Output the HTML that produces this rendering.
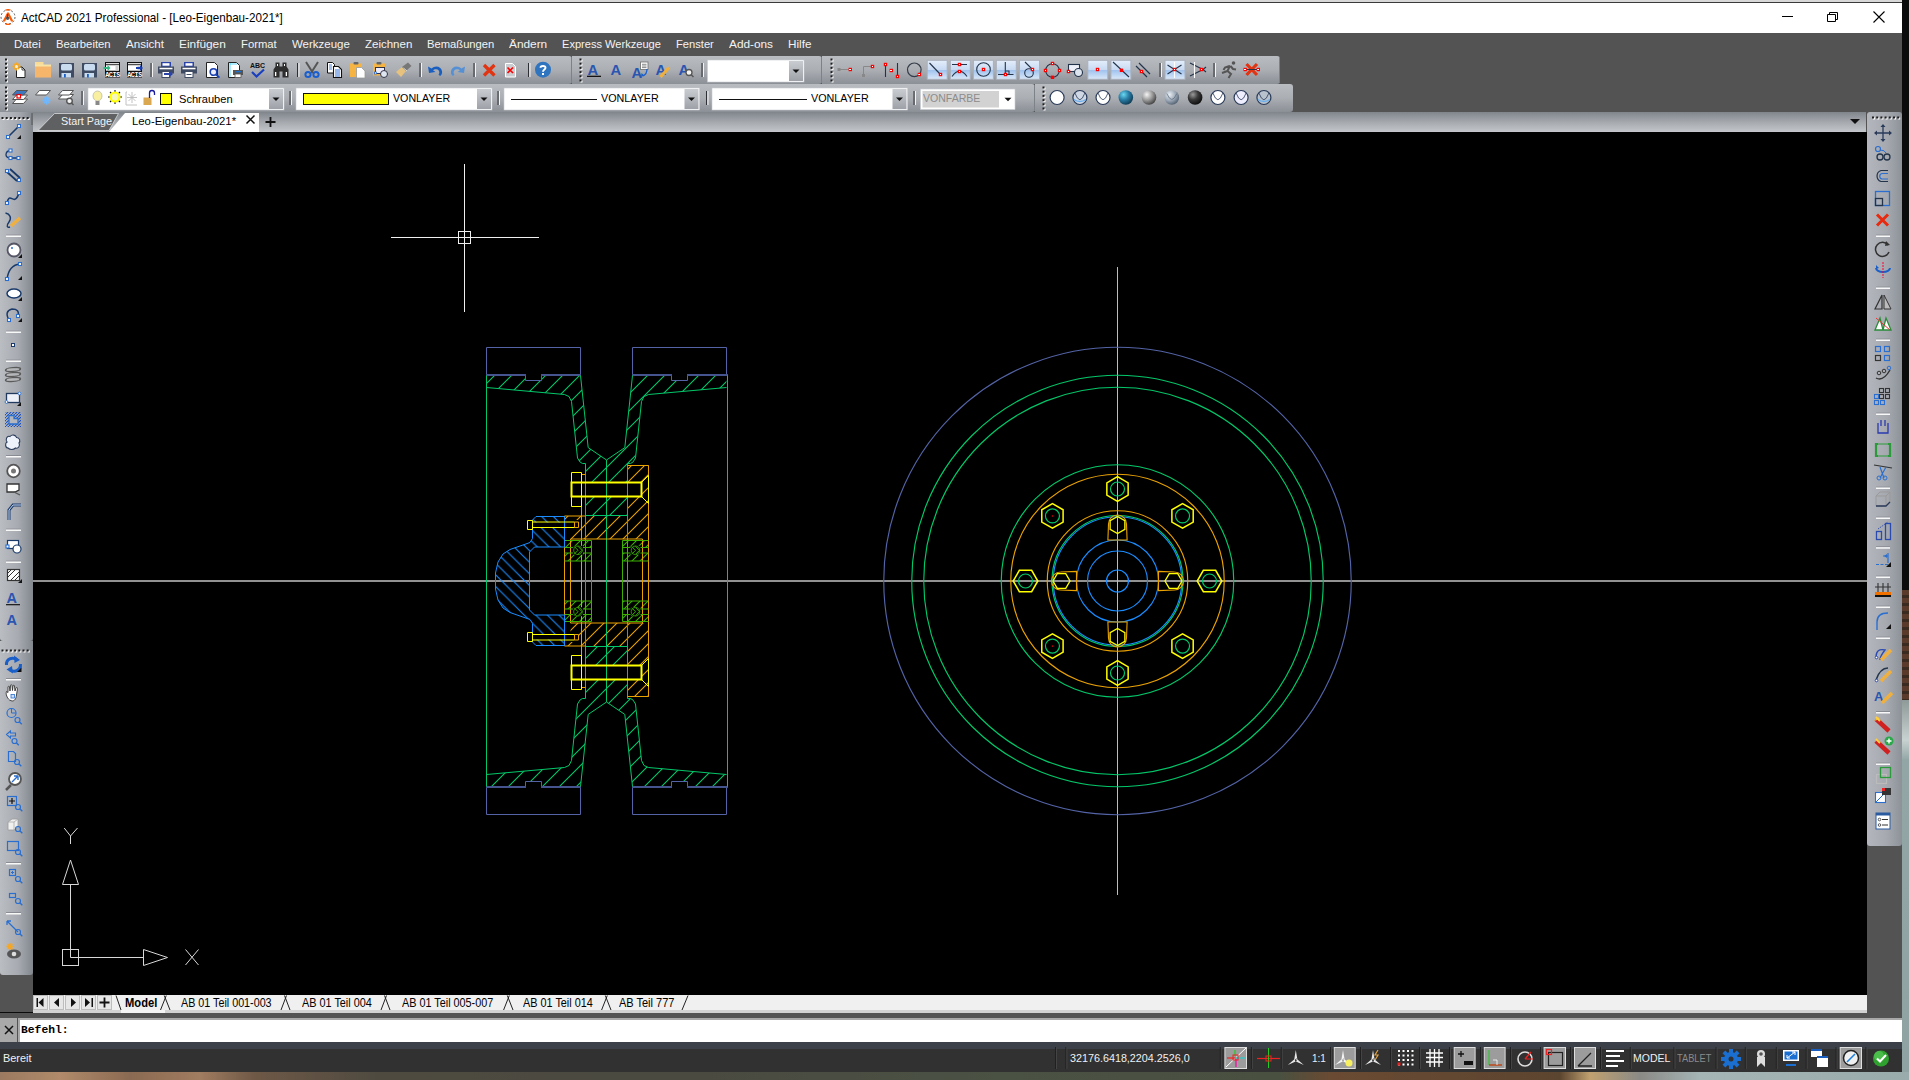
<!DOCTYPE html><html><head><meta charset="utf-8"><style>
*{margin:0;padding:0;box-sizing:border-box}
html,body{width:1909px;height:1080px;overflow:hidden;background:#0a0a0a}
.a{position:absolute}
.tx{position:absolute;white-space:pre;transform-origin:0 0}
svg{position:absolute;left:0;top:0;overflow:visible}
</style></head><body><div class="a" style="left:0px;top:0px;width:1909px;height:1080px;background:#0b0b0b"></div>
<div class="a" style="left:1902px;top:590px;width:7px;height:110px;background:repeating-linear-gradient(#5a3a2a 0 5px,#3a2a20 5px 8px)"></div>
<div class="a" style="left:1902px;top:700px;width:7px;height:380px;background:linear-gradient(#8e9a98 0,#c8d2d0 40px,#93a6a6 60px,#8fa3a3 100%)"></div>
<div class="a" style="left:0px;top:1072px;width:1909px;height:8px;background:linear-gradient(90deg,#9a7a60 0,#b08a6a 60px,#8a6a52 130px,#a07c60 200px,#6e5846 255px,#4e4a40 380px,#4a4a40 700px,#4a5244 1000px,#4a5040 1280px,#6a4a32 1330px,#5c4530 1560px,#c0a070 1590px,#8a8a86 1640px,#a5b5b5 1700px,#9aabab 1909px)"></div>
<div class="a" style="left:0px;top:0px;width:1902px;height:2px;background:#d8d8d8"></div>
<div class="a" style="left:0px;top:2px;width:1902px;height:1px;background:#3a3a3a"></div>
<div class="a" style="left:0px;top:3px;width:1902px;height:30px;background:#ffffff"></div>
<svg style="left:0px;top:9px" width="16" height="16" viewBox="0 0 16 16"><circle cx="8" cy="8" r="7" fill="none" stroke="#333" stroke-width="0.8" stroke-dasharray="2 2"/><path d="M5.5 1.2 A7 7 0 0 1 10.5 1.2" stroke="#ff5a00" stroke-width="1.3" fill="none"/><path d="M5.5 14.8 A7 7 0 0 0 10.5 14.8" stroke="#ff5a00" stroke-width="1.3" fill="none"/><path d="M2.5 12.5 L7.2 3.5 L8.8 3.5 L13.5 12.5 L11 12.5 L8 6.5 L5 12.5 Z" fill="#ff5a00"/><circle cx="7.6" cy="9.2" r="1.7" fill="#555"/><path d="M7.6 5 L7.6 9" stroke="#444" stroke-width="1.2"/></svg>
<span class="tx" style="left:21.30px;top:11.00px;font-size:12.52px;line-height:14px;font-family:'Liberation Sans', sans-serif;font-weight:normal;color:#000;transform:scaleX(0.9309);">ActCAD 2021 Professional - [Leo-Eigenbau-2021*]</span>
<svg style="left:1782px;top:16px" width="12" height="1" viewBox="0 0 12 1"><rect width="11" height="1" fill="#000"/></svg><svg style="left:1827px;top:12px" width="12" height="10" viewBox="0 0 12 10"><path d="M0.5 2.5h8v7h-8z M2.5 2.5v-2h8v7h-2" fill="none" stroke="#000"/></svg><svg style="left:1873px;top:11px" width="12" height="12" viewBox="0 0 12 12"><path d="M0.5 0.5 L11.5 11.5 M11.5 0.5 L0.5 11.5" stroke="#000" stroke-width="1.1"/></svg>
<div class="a" style="left:0px;top:33px;width:1902px;height:23px;background:#535353"></div>
<span class="tx" style="left:14.30px;top:38.00px;font-size:11.41px;line-height:12px;font-family:'Liberation Sans', sans-serif;font-weight:normal;color:#f4f4f4;transform:scaleX(1.0028);">Datei</span>
<span class="tx" style="left:56.00px;top:38.00px;font-size:11.41px;line-height:12px;font-family:'Liberation Sans', sans-serif;font-weight:normal;color:#f4f4f4;transform:scaleX(0.9897);">Bearbeiten</span>
<span class="tx" style="left:126.00px;top:38.00px;font-size:11.41px;line-height:12px;font-family:'Liberation Sans', sans-serif;font-weight:normal;color:#f4f4f4;transform:scaleX(1.0160);">Ansicht</span>
<span class="tx" style="left:179.00px;top:38.00px;font-size:11.41px;line-height:12px;font-family:'Liberation Sans', sans-serif;font-weight:normal;color:#f4f4f4;transform:scaleX(1.0394);">Einfügen</span>
<span class="tx" style="left:240.90px;top:38.00px;font-size:11.41px;line-height:12px;font-family:'Liberation Sans', sans-serif;font-weight:normal;color:#f4f4f4;transform:scaleX(0.9883);">Format</span>
<span class="tx" style="left:291.70px;top:38.00px;font-size:11.41px;line-height:12px;font-family:'Liberation Sans', sans-serif;font-weight:normal;color:#f4f4f4;transform:scaleX(1.0056);">Werkzeuge</span>
<span class="tx" style="left:364.60px;top:38.00px;font-size:11.41px;line-height:12px;font-family:'Liberation Sans', sans-serif;font-weight:normal;color:#f4f4f4;transform:scaleX(1.0081);">Zeichnen</span>
<span class="tx" style="left:426.70px;top:38.00px;font-size:11.41px;line-height:12px;font-family:'Liberation Sans', sans-serif;font-weight:normal;color:#f4f4f4;transform:scaleX(0.9828);">Bemaßungen</span>
<span class="tx" style="left:508.50px;top:38.00px;font-size:11.41px;line-height:12px;font-family:'Liberation Sans', sans-serif;font-weight:normal;color:#f4f4f4;transform:scaleX(1.0386);">Ändern</span>
<span class="tx" style="left:561.80px;top:38.00px;font-size:11.41px;line-height:12px;font-family:'Liberation Sans', sans-serif;font-weight:normal;color:#f4f4f4;transform:scaleX(0.9711);">Express Werkzeuge</span>
<span class="tx" style="left:676.20px;top:38.00px;font-size:11.41px;line-height:12px;font-family:'Liberation Sans', sans-serif;font-weight:normal;color:#f4f4f4;transform:scaleX(0.9776);">Fenster</span>
<span class="tx" style="left:728.50px;top:38.00px;font-size:11.41px;line-height:12px;font-family:'Liberation Sans', sans-serif;font-weight:normal;color:#f4f4f4;transform:scaleX(1.0357);">Add-ons</span>
<span class="tx" style="left:788.10px;top:38.00px;font-size:11.41px;line-height:12px;font-family:'Liberation Sans', sans-serif;font-weight:normal;color:#f4f4f4;transform:scaleX(1.0255);">Hilfe</span>
<div class="a" style="left:0px;top:56px;width:1902px;height:56px;background:#535353"></div>
<div class="a" style="left:0px;top:56px;width:572px;height:28px;background:linear-gradient(#b9bcc1 0,#abafb4 50%,#8b8f96 100%);border-radius:0 3px 3px 0"></div>
<div class="a" style="left:572px;top:56px;width:250px;height:28px;background:linear-gradient(#b9bcc1 0,#abafb4 50%,#8b8f96 100%);border-radius:0 3px 3px 0"></div>
<div class="a" style="left:822px;top:56px;width:458px;height:28px;background:linear-gradient(#b9bcc1 0,#abafb4 50%,#8b8f96 100%);border-radius:0 3px 3px 0"></div>
<div class="a" style="left:0px;top:84px;width:1035px;height:28px;background:linear-gradient(#b9bcc1 0,#abafb4 50%,#8b8f96 100%);border-radius:0 3px 3px 0"></div>
<div class="a" style="left:1035px;top:84px;width:258px;height:28px;background:linear-gradient(#b9bcc1 0,#abafb4 50%,#8b8f96 100%);border-radius:0 3px 3px 0"></div>
<svg width="1909" height="1080" viewBox="0 0 1909 1080"><defs><linearGradient id="hlg" x1="0" y1="0" x2="0" y2="1"><stop offset="0" stop-color="#e4eefb"/><stop offset="0.5" stop-color="#c7daf3"/><stop offset="0.52" stop-color="#9fc2ee"/><stop offset="1" stop-color="#dbe9f9"/></linearGradient><linearGradient id="ddg" x1="0" y1="0" x2="0" y2="1"><stop offset="0" stop-color="#c9ccd1"/><stop offset="1" stop-color="#9ea2a8"/></linearGradient><radialGradient id="sph_b" cx="0.35" cy="0.3" r="0.7"><stop offset="0" stop-color="#6ad8f0"/><stop offset="0.5" stop-color="#2a7fa8"/><stop offset="1" stop-color="#12405a"/></radialGradient><radialGradient id="sph_g" cx="0.35" cy="0.3" r="0.7"><stop offset="0" stop-color="#f4f4f4"/><stop offset="0.55" stop-color="#9a9a9a"/><stop offset="1" stop-color="#4a4a4a"/></radialGradient><radialGradient id="sph_k" cx="0.35" cy="0.3" r="0.7"><stop offset="0" stop-color="#9a9a9a"/><stop offset="0.5" stop-color="#3a3a3a"/><stop offset="1" stop-color="#101010"/></radialGradient><radialGradient id="sph_s" cx="0.35" cy="0.3" r="0.7"><stop offset="0" stop-color="#e8eef4"/><stop offset="0.6" stop-color="#9aa6b4"/><stop offset="1" stop-color="#5a6878"/></radialGradient></defs><rect x="571" y="57" width="1" height="26" fill="#7d8188"/><rect x="821" y="57" width="1" height="26" fill="#7d8188"/><rect x="1279" y="57" width="1" height="26" fill="#7d8188"/><rect x="1034" y="85" width="1" height="26" fill="#7d8188"/><rect x="6" y="59.5" width="2" height="2" fill="#fff"/><rect x="5" y="58.5" width="2" height="2" fill="#1e1e1e"/><rect x="6" y="63.7" width="2" height="2" fill="#fff"/><rect x="5" y="62.7" width="2" height="2" fill="#1e1e1e"/><rect x="6" y="67.9" width="2" height="2" fill="#fff"/><rect x="5" y="66.9" width="2" height="2" fill="#1e1e1e"/><rect x="6" y="72.1" width="2" height="2" fill="#fff"/><rect x="5" y="71.1" width="2" height="2" fill="#1e1e1e"/><rect x="6" y="76.3" width="2" height="2" fill="#fff"/><rect x="5" y="75.3" width="2" height="2" fill="#1e1e1e"/><rect x="6" y="80.5" width="2" height="2" fill="#fff"/><rect x="5" y="79.5" width="2" height="2" fill="#1e1e1e"/><g transform="translate(12,62)"><path d="M4.5 5 h5.5 l3 3 v7.5 h-8.5 z" fill="#fff" stroke="#222" stroke-width="1"/><path d="M10 5 v3 h3" fill="none" stroke="#222" stroke-width="0.8"/><g stroke="#f5a623" stroke-width="1.3"><path d="M4.5 0.5 v8 M0.5 4.5 h8 M1.7 1.7 l5.6 5.6 M7.3 1.7 l-5.6 5.6"/></g><circle cx="4.5" cy="4.5" r="1.5" fill="#fff3d0"/></g><g transform="translate(35,62)"><rect x="0" y="0" width="8.5" height="3.5" fill="#f8dc96"/><rect x="0" y="2.5" width="16" height="3" fill="#f8e2a4"/><rect x="0" y="4.5" width="16" height="11" fill="#f5b66c"/></g><g transform="translate(59,63)"><rect x="0" y="0" width="15" height="14.5" fill="#3f4b62"/><rect x="2" y="1" width="11" height="6.5" rx="1.5" fill="#c8dbef"/><rect x="2.5" y="10" width="9.5" height="4.5" fill="#c8dbef"/><rect x="5" y="11" width="1.8" height="3.5" fill="#1a5fc8"/></g><g transform="translate(82,63)"><rect x="0" y="0" width="15" height="14.5" fill="#3f4b62"/><rect x="2" y="1" width="11" height="6.5" rx="1.5" fill="#c8dbef"/><rect x="2.5" y="10" width="9.5" height="4.5" fill="#c8dbef"/><rect x="5" y="11" width="1.8" height="3.5" fill="#1a5fc8"/></g><g transform="translate(105,62)"><rect x="0" y="0" width="15" height="15.5" fill="#111"/><rect x="1" y="1" width="13" height="1.3" fill="#ddd"/><rect x="1" y="3.2" width="13" height="5.5" fill="#fff"/><rect x="10.5" y="3.5" width="3" height="5" fill="#cfcfcf"/><text x="7.5" y="14.8" font-family="Liberation Mono" font-weight="bold" font-size="6.8" fill="#fff" text-anchor="middle" letter-spacing="-0.4">ACIS</text><path d="M-1.5 5 h4 v-2 l3 3 l-3 3 v-2 h-4 z" fill="#36b37e"/></g><g transform="translate(127,62)"><rect x="0" y="0" width="15" height="15.5" fill="#111"/><rect x="1" y="1" width="13" height="1.3" fill="#ddd"/><rect x="1" y="3.2" width="13" height="5.5" fill="#fff"/><rect x="10.5" y="3.5" width="3" height="5" fill="#cfcfcf"/><text x="7.5" y="14.8" font-family="Liberation Mono" font-weight="bold" font-size="6.8" fill="#fff" text-anchor="middle" letter-spacing="-0.4">ACIS</text><path d="M9 5 h4 v-2 l3 3 l-3 3 v-2 h-4 z" fill="#1a3fb0"/></g><rect x="150.5" y="63" width="1.3" height="14" fill="#2d3035"/><rect x="151.8" y="63" width="1.2" height="14" fill="#f4f4f4"/><g transform="translate(158,62)"><rect x="3" y="0" width="10" height="5" fill="#2c44a8"/><rect x="4.5" y="1.2" width="7" height="2.5" fill="#fff"/><rect x="0" y="4.5" width="16" height="7" fill="#3f4b62"/><rect x="1.5" y="5.8" width="13" height="1.5" fill="#fff"/><rect x="4" y="9.5" width="8" height="6" fill="#fff" stroke="#3f4b62" stroke-width="1"/><path d="M6 11 h5 v-2.5 l4 3.5 l-4 3.5 v-2.5 h-5 z" fill="#2c44a8"/></g><g transform="translate(181,62)"><rect x="3" y="0" width="10" height="5" fill="#2c44a8"/><rect x="4.5" y="1.2" width="7" height="2.5" fill="#fff"/><rect x="0" y="4.5" width="16" height="7" fill="#3f4b62"/><rect x="1.5" y="5.8" width="13" height="1.5" fill="#fff"/><rect x="4" y="9.5" width="8" height="6" fill="#fff" stroke="#3f4b62" stroke-width="1"/><rect x="5.5" y="12" width="5" height="1" fill="#3f4b62"/></g><g transform="translate(206,62)"><path d="M0.5 0.5 h8 l3 3 v12 h-11 z" fill="#fff" stroke="#222"/><circle cx="7.5" cy="10" r="3.3" fill="#eef" stroke="#1a40b0" stroke-width="1.6"/><path d="M10 12.5 l3.5 3.2" stroke="#1a40b0" stroke-width="1.8"/></g><g transform="translate(228,62)"><path d="M0.5 0.5 h8 l3 3 v12 h-11 z" fill="#fff" stroke="#222"/><path d="M2 1 v14 M2 2 h7" stroke="#3cf" stroke-width="0.8"/><rect x="5" y="8" width="10" height="5" fill="#555"/><rect x="7" y="9" width="6" height="1.3" fill="#1a6fd0"/><rect x="7" y="12" width="6" height="3.5" fill="#fff" stroke="#555" stroke-width="0.8"/></g><g transform="translate(249.5,62)"><text x="8" y="6.3" font-family="Liberation Sans" font-weight="bold" font-size="7" fill="#111" text-anchor="middle">ABC</text><path d="M2.5 10 L7 14.5 L14.5 7.5" fill="none" stroke="#1a40c0" stroke-width="2.2"/></g><g transform="translate(273,62)"><path d="M2.5 0.5 h4 v4 h3 v-4 h4 v4 l2 3 v8 h-6 v-6 h-3 v6 h-6 v-8 l2 -3 z" fill="#2e2e2e"/><rect x="2" y="10" width="1.3" height="4" fill="#fff"/><rect x="12.7" y="10" width="1.3" height="4" fill="#fff"/><rect x="4" y="2" width="1" height="2" fill="#fff"/><rect x="11" y="2" width="1" height="2" fill="#fff"/></g><rect x="297" y="63" width="1.3" height="14" fill="#2d3035"/><rect x="298.3" y="63" width="1.2" height="14" fill="#f4f4f4"/><g transform="translate(304,62)"><path d="M2 0 L9 11 M14 0 L7 11" stroke="#555" stroke-width="2"/><circle cx="4" cy="12.5" r="2.6" fill="none" stroke="#1a5fd0" stroke-width="2"/><circle cx="12" cy="12.5" r="2.6" fill="none" stroke="#1a5fd0" stroke-width="2"/></g><g transform="translate(327,62)"><path d="M0.5 0.5 h5 l2 2 v8.5 h-7 z" fill="#fff" stroke="#111"/><path d="M2 3h3 M2 5h3 M2 7h3" stroke="#1a5fd0" stroke-width="0.8"/><path d="M6.5 4.5 h5 l3 3 v8 h-8 z" fill="#fff" stroke="#111" stroke-width="1.1"/><path d="M8 8h5 M8 10h5 M8 12h5 M8 14h5" stroke="#1a5fd0" stroke-width="0.9"/></g><g transform="translate(350,62)"><rect x="0" y="1.5" width="12" height="13.5" fill="#f6b443"/><rect x="3.5" y="0" width="5" height="2.5" rx="1" fill="#666"/><path d="M6.5 5.5 h5 l3.5 3.5 v7 h-8.5 z" fill="#fff" stroke="#999" stroke-width="0.8"/></g><g transform="translate(373,62)"><rect x="0" y="1.5" width="12" height="12" fill="#f6b443"/><rect x="3.5" y="0" width="5" height="2.5" rx="1" fill="#666"/><rect x="2.5" y="5.5" width="9" height="6" fill="#eef" stroke="#334" stroke-width="1"/><circle cx="11" cy="12" r="3.5" fill="#dde6f0" stroke="#334"/><rect x="1.5" y="10" width="2" height="2" fill="#fff" stroke="#1a5fd0" stroke-width="0.7"/></g><g transform="translate(396,62)"><path d="M0 10 L6 5 L10 9 L5 15 Z" fill="#e6c27e"/><path d="M6 5 L12 0.5 L15.5 4 L10 9 Z" fill="#777"/><path d="M7.5 6 L11 9" stroke="#eee" stroke-width="0.8"/></g><rect x="419.5" y="63" width="1.3" height="14" fill="#2d3035"/><rect x="420.8" y="63" width="1.2" height="14" fill="#f4f4f4"/><g transform="translate(427,62)"><path d="M2 11 L1 4.5 L4.5 6.5 C8 3 14 4 15 9 C15.5 11.5 14.5 13 13 14 L11.5 12.5 C13 11 12.5 7.5 9.5 7.2 C8 7 6.8 7.6 6 8.3 L8.5 10 Z" fill="#1a5fc0"/></g><g transform="translate(450,62)"><path d="M14 11 L15 4.5 L11.5 6.5 C8 3 2 4 1 9 C0.5 11.5 1.5 13 3 14 L4.5 12.5 C3 11 3.5 7.5 6.5 7.2 C8 7 9.2 7.6 10 8.3 L7.5 10 Z" fill="#5590d4"/></g><rect x="473.5" y="63" width="1.3" height="14" fill="#2d3035"/><rect x="474.8" y="63" width="1.2" height="14" fill="#f4f4f4"/><g transform="translate(482.5,63.5)"><path d="M1.5 1.5 L12 12 M12 1.5 L1.5 12" stroke="#e03412" stroke-width="3.3"/></g><g transform="translate(505,63)"><path d="M0.5 0.5 h7 l3 3 v10.5 h-10 z" fill="#c9ccd0" stroke="#fff" stroke-width="1"/><path d="M2.5 4.5 L8 10 M8 4.5 L2.5 10" stroke="#f00" stroke-width="1.6"/></g><rect x="528" y="63" width="1.3" height="14" fill="#2d3035"/><rect x="529.3" y="63" width="1.2" height="14" fill="#f4f4f4"/><g transform="translate(535,62)"><circle cx="8" cy="7.7" r="8" fill="#2f74bf"/><path d="M5.5 5.8 C5.5 3.5 10.5 3.3 10.5 5.8 C10.5 7.5 8 7.5 8 9.8" fill="none" stroke="#fff" stroke-width="1.9"/><rect x="7" y="11" width="2" height="2" fill="#fff"/></g><rect x="580.5" y="59.5" width="2" height="2" fill="#fff"/><rect x="579.5" y="58.5" width="2" height="2" fill="#1e1e1e"/><rect x="580.5" y="63.7" width="2" height="2" fill="#fff"/><rect x="579.5" y="62.7" width="2" height="2" fill="#1e1e1e"/><rect x="580.5" y="67.9" width="2" height="2" fill="#fff"/><rect x="579.5" y="66.9" width="2" height="2" fill="#1e1e1e"/><rect x="580.5" y="72.1" width="2" height="2" fill="#fff"/><rect x="579.5" y="71.1" width="2" height="2" fill="#1e1e1e"/><rect x="580.5" y="76.3" width="2" height="2" fill="#fff"/><rect x="579.5" y="75.3" width="2" height="2" fill="#1e1e1e"/><rect x="580.5" y="80.5" width="2" height="2" fill="#fff"/><rect x="579.5" y="79.5" width="2" height="2" fill="#1e1e1e"/><text x="587.5" y="75" font-family="Liberation Sans" font-weight="bold" font-size="14.8" fill="#2a55b0">A</text><rect x="587" y="75.7" width="14" height="1.3" fill="#111"/><text x="610.5" y="75" font-family="Liberation Sans" font-weight="bold" font-size="14.8" fill="#2a55b0">A</text><text x="631.5" y="77.5" font-family="Liberation Sans" font-weight="bold" font-size="14.8" fill="#2a55b0">A</text><rect x="640.5" y="62" width="7.5" height="7.5" fill="#fff" stroke="#777" stroke-width="0.9"/><path d="M642 64.3h4.5 M642 66h4.5 M642 67.6h4.5" stroke="#555" stroke-width="0.7"/><path d="M647 69 C647 73 645 75 643 76" fill="none" stroke="#1a5fd0" stroke-width="1.3"/><path d="M641 77 l0.5-4 l3 2.5z" fill="#1a5fd0"/><text x="655.5" y="75" font-family="Liberation Sans" font-weight="bold" font-size="14.8" fill="#2a55b0">A</text><path d="M660.5 77 L669 67.5" stroke="#f0b040" stroke-width="3.2"/><text x="678.5" y="75" font-family="Liberation Sans" font-weight="bold" font-size="14.8" fill="#2a55b0">A</text><circle cx="689" cy="72.5" r="3" fill="#f4f4f4" stroke="#555" stroke-width="1.3"/><path d="M691 74.5 l2.5 2.5" stroke="#555" stroke-width="1.5"/><rect x="701.5" y="63" width="1.3" height="14" fill="#2d3035"/><rect x="702.8" y="63" width="1.2" height="14" fill="#f4f4f4"/><rect x="707.5" y="60" width="96.5" height="22" fill="#fff" stroke="#c8cbd0" stroke-width="0.6"/><rect x="789" y="61" width="14" height="20" fill="url(#ddg)"/><path d="M792.5,69.5 h7 l-3.5,3.5 z" fill="#111"/><rect x="831.5" y="59.5" width="2" height="2" fill="#fff"/><rect x="830.5" y="58.5" width="2" height="2" fill="#1e1e1e"/><rect x="831.5" y="63.7" width="2" height="2" fill="#fff"/><rect x="830.5" y="62.7" width="2" height="2" fill="#1e1e1e"/><rect x="831.5" y="67.9" width="2" height="2" fill="#fff"/><rect x="830.5" y="66.9" width="2" height="2" fill="#1e1e1e"/><rect x="831.5" y="72.1" width="2" height="2" fill="#fff"/><rect x="830.5" y="71.1" width="2" height="2" fill="#1e1e1e"/><rect x="831.5" y="76.3" width="2" height="2" fill="#fff"/><rect x="830.5" y="75.3" width="2" height="2" fill="#1e1e1e"/><rect x="831.5" y="80.5" width="2" height="2" fill="#fff"/><rect x="830.5" y="79.5" width="2" height="2" fill="#1e1e1e"/><rect x="837.5" y="68" width="3" height="3" fill="#888"/><path d="M840 69.5 H849" stroke="#888" stroke-width="1"/><rect x="849.1999999999999" y="68.4" width="2.2" height="2.2" fill="#fff" stroke="#f00" stroke-width="1.2"/><rect x="862" y="74" width="3" height="3" fill="#888"/><path d="M863.5 74 V66.5 H871" fill="none" stroke="#888" stroke-width="1"/><rect x="871.4" y="65.4" width="2.2" height="2.2" fill="#fff" stroke="#f00" stroke-width="1.2"/><path d="M885.5 64 V77 M897.5 63 V77" stroke="#22334a" stroke-width="1.1"/><rect x="884.4" y="63.4" width="2.2" height="2.2" fill="#fff" stroke="#f00" stroke-width="1.2"/><rect x="890.1999999999999" y="69.4" width="2.2" height="2.2" fill="#fff" stroke="#f00" stroke-width="1.2"/><rect x="896.4" y="75.4" width="2.2" height="2.2" fill="#fff" stroke="#f00" stroke-width="1.2"/><circle cx="914.3" cy="69.8" r="6.8" fill="none" stroke="#333c48" stroke-width="1.2"/><rect x="918.3" y="73.4" width="2.2" height="2.2" fill="#fff" stroke="#f00" stroke-width="1.2"/><rect x="927.2" y="60.3" width="20" height="19" fill="url(#hlg)" stroke="#a8b0bb"/><rect x="950.3" y="60.3" width="20" height="19" fill="url(#hlg)" stroke="#a8b0bb"/><rect x="973.4" y="60.3" width="20" height="19" fill="url(#hlg)" stroke="#a8b0bb"/><rect x="996.3" y="60.3" width="20" height="19" fill="url(#hlg)" stroke="#a8b0bb"/><rect x="1019.5" y="60.3" width="20" height="19" fill="url(#hlg)" stroke="#a8b0bb"/><rect x="1087.8" y="60.3" width="20" height="19" fill="url(#hlg)" stroke="#a8b0bb"/><rect x="1110.9" y="60.3" width="20" height="19" fill="url(#hlg)" stroke="#a8b0bb"/><rect x="1165.0" y="60.3" width="20" height="19" fill="url(#hlg)" stroke="#a8b0bb"/><path d="M929.5 63 L940.5 74.5" stroke="#22334a" stroke-width="1.1"/><rect x="939.4" y="73.4" width="2.2" height="2.2" fill="#fff" stroke="#f00" stroke-width="1.2"/><path d="M952 64.5 H967 M952 76.5 Q959.5 66 967 76.5" fill="none" stroke="#22334a" stroke-width="1.1"/><rect x="958.4" y="63.4" width="2.2" height="2.2" fill="#fff" stroke="#f00" stroke-width="1.2"/><rect x="958.4" y="70.4" width="2.2" height="2.2" fill="#fff" stroke="#f00" stroke-width="1.2"/><circle cx="983.5" cy="69.5" r="6.8" fill="none" stroke="#22334a" stroke-width="1.1"/><rect x="982.4" y="68.4" width="2.2" height="2.2" fill="#fff" stroke="#f00" stroke-width="1.2"/><path d="M1005.3 62 V74.5 M998 74.5 H1013.5 M1006 71 H1009 V74" fill="none" stroke="#22334a" stroke-width="1.1"/><rect x="1004.4" y="73.4" width="2.2" height="2.2" fill="#fff" stroke="#f00" stroke-width="1.2"/><path d="M1025 62 L1032 69" stroke="#22334a" stroke-width="1.1"/><circle cx="1029" cy="73" r="4.3" fill="none" stroke="#22334a" stroke-width="1.1"/><rect x="1031.4" y="68.4" width="2.2" height="2.2" fill="#fff" stroke="#f00" stroke-width="1.2"/><circle cx="1052.5" cy="70.5" r="6.8" fill="none" stroke="#22334a" stroke-width="1.1"/><rect x="1051.4" y="62.4" width="2.2" height="2.2" fill="#fff" stroke="#f00" stroke-width="1.2"/><rect x="1044.4" y="69.4" width="2.2" height="2.2" fill="#fff" stroke="#f00" stroke-width="1.2"/><rect x="1058.4" y="69.4" width="2.2" height="2.2" fill="#fff" stroke="#f00" stroke-width="1.2"/><rect x="1051.4" y="76.2" width="2.2" height="2.2" fill="#fff" stroke="#f00" stroke-width="1.2"/><rect x="1068.5" y="64.5" width="11" height="7" fill="#eef2f8" stroke="#22334a" stroke-width="1.1"/><circle cx="1078.5" cy="72.5" r="4" fill="#dde4ee" stroke="#22334a" stroke-width="1.1"/><rect x="1067.4" y="70.4" width="2.2" height="2.2" fill="#fff" stroke="#f00" stroke-width="1.2"/><rect x="1096.4" y="68.4" width="2.2" height="2.2" fill="#fff" stroke="#f00" stroke-width="1.2"/><path d="M1113 62 L1129 77" stroke="#22334a" stroke-width="1.1"/><rect x="1120.4" y="69.2" width="2.2" height="2.2" fill="#fff" stroke="#f00" stroke-width="1.2"/><path d="M1136 66 L1147 77 M1139 63 L1150 74" stroke="#22334a" stroke-width="1.2"/><rect x="1140.4" y="70.4" width="2.2" height="2.2" fill="#fff" stroke="#f00" stroke-width="1.2"/><rect x="1159.5" y="63" width="1.3" height="14" fill="#2d3035"/><rect x="1160.8" y="63" width="1.2" height="14" fill="#f4f4f4"/><path d="M1167.5 65 L1181.5 74 M1181.5 65 L1167.5 74" stroke="#22334a" stroke-width="1.1"/><path d="M1174.5 62 V78" stroke="#fff" stroke-width="1.1"/><rect x="1173.4" y="68.4" width="2.2" height="2.2" fill="#fff" stroke="#f00" stroke-width="1.2"/><path d="M1190 63 L1203 69.5 L1190 76 M1203 69.5 L1206 67 M1203 69.5 L1206 72" fill="none" stroke="#22334a" stroke-width="1.1"/><path d="M1194.5 62 V78" stroke="#fff" stroke-width="1.1"/><rect x="1200.4" y="68.4" width="2.2" height="2.2" fill="#fff" stroke="#f00" stroke-width="1.2"/><rect x="1213.5" y="63" width="1.3" height="14" fill="#2d3035"/><rect x="1214.8" y="63" width="1.2" height="14" fill="#f4f4f4"/><circle cx="1233.5" cy="63" r="1.8" fill="#555"/><path d="M1230 65.5 L1227.5 71 L1231 74 L1228.5 78 M1227.5 71 L1222 73 M1229.5 66 L1225 67.5 L1223.5 70 M1230.5 66 L1233 69 L1236 69.5" fill="none" stroke="#555" stroke-width="2"/><path d="M1246.5 64 L1257 75 M1257 64 L1246.5 75" stroke="#e03412" stroke-width="3.2"/><path d="M1245 69.5 H1259" stroke="#22334a" stroke-width="1"/><rect x="1244.1000000000001" y="68.4" width="2.2" height="2.2" fill="#fff" stroke="#f00" stroke-width="1.2"/><rect x="1257.2" y="68.4" width="2.2" height="2.2" fill="#fff" stroke="#f00" stroke-width="1.2"/><rect x="6" y="87.5" width="2" height="2" fill="#fff"/><rect x="5" y="86.5" width="2" height="2" fill="#1e1e1e"/><rect x="6" y="91.7" width="2" height="2" fill="#fff"/><rect x="5" y="90.7" width="2" height="2" fill="#1e1e1e"/><rect x="6" y="95.9" width="2" height="2" fill="#fff"/><rect x="5" y="94.9" width="2" height="2" fill="#1e1e1e"/><rect x="6" y="100.1" width="2" height="2" fill="#fff"/><rect x="5" y="99.1" width="2" height="2" fill="#1e1e1e"/><rect x="6" y="104.3" width="2" height="2" fill="#fff"/><rect x="5" y="103.3" width="2" height="2" fill="#1e1e1e"/><rect x="6" y="108.5" width="2" height="2" fill="#fff"/><rect x="5" y="107.5" width="2" height="2" fill="#1e1e1e"/><path d="M16.5,99.0 h11 l-4,4.5 h-11 z" fill="#fff" stroke="#555" stroke-width="1"/><path d="M16.5,95.0 h11 l-4,4.5 h-11 z" fill="#fff" stroke="#555" stroke-width="1"/><path d="M16.5,90.5 h11 l-4,4.5 h-11 z" fill="#3b78c0" stroke="#555" stroke-width="1"/><rect x="17" y="94.5" width="3.5" height="3.5" fill="#fff" stroke="#e00" stroke-width="1.2"/><path d="M39.5,90.5 h11 l-4,4.5 h-11 z" fill="#fff" stroke="#555" stroke-width="1"/><g stroke="#6fb8ff" stroke-width="1.3"><path d="M46.5 96.5 v8 M42.5 100.5 h8 M43.7 97.7 l5.6 5.6 M49.3 97.7 l-5.6 5.6"/></g><path d="M62.5,94.5 h11 l-4,4.5 h-11 z" fill="#fff" stroke="#555" stroke-width="1"/><path d="M62.5,90.5 h11 l-4,4.5 h-11 z" fill="#fff" stroke="#555" stroke-width="1"/><circle cx="69.5" cy="101" r="2.8" fill="#f4f4f4" stroke="#555" stroke-width="1.4"/><path d="M71.5 103 l2 2" stroke="#555" stroke-width="1.5"/><rect x="81.5" y="91" width="1.3" height="14" fill="#2d3035"/><rect x="82.8" y="91" width="1.2" height="14" fill="#f4f4f4"/><rect x="88" y="88" width="196" height="22" fill="#fff" stroke="#c8cbd0" stroke-width="0.6"/><rect x="269" y="89" width="14" height="20" fill="url(#ddg)"/><path d="M272.5,97.5 h7 l-3.5,3.5 z" fill="#111"/><ellipse cx="97.5" cy="96" rx="4.5" ry="5" fill="#f8f0a0" stroke="#bba" stroke-width="0.8"/><rect x="95.5" y="101" width="4" height="4" fill="#888"/><g stroke="#111" stroke-width="1.1"><path d="M115 90 v14 M108 97 h14 M110 92 l10 10 M120 92 l-10 10"/></g><circle cx="115" cy="97" r="4.5" fill="#f5f5c0" stroke="#ff0" stroke-width="2"/><g stroke="#bbb" stroke-width="0.9" fill="none"><path d="M132 92 v11 M127 97.5 h10 M128.5 94 l7 7 M135.5 94 l-7 7"/><path d="M127 92 h-1 v13 h11"/></g><rect x="143.5" y="97.5" width="8" height="7.5" fill="#d9a851"/><path d="M149.5 98 v-5 a2.5 2.5 0 0 1 5 0 v2" fill="none" stroke="#1a1aa0" stroke-width="1.3"/><rect x="160.5" y="93.5" width="11" height="11" fill="#ff0" stroke="#111"/><rect x="289.5" y="91" width="1.3" height="14" fill="#2d3035"/><rect x="290.8" y="91" width="1.2" height="14" fill="#f4f4f4"/><rect x="296" y="88" width="196" height="22" fill="#fff" stroke="#c8cbd0" stroke-width="0.6"/><rect x="477" y="89" width="14" height="20" fill="url(#ddg)"/><path d="M480.5,97.5 h7 l-3.5,3.5 z" fill="#111"/><rect x="303.5" y="93.5" width="85" height="11" fill="#ff0" stroke="#111"/><rect x="497.5" y="91" width="1.3" height="14" fill="#2d3035"/><rect x="498.8" y="91" width="1.2" height="14" fill="#f4f4f4"/><rect x="504" y="88" width="195.5" height="22" fill="#fff" stroke="#c8cbd0" stroke-width="0.6"/><rect x="684.5" y="89" width="14" height="20" fill="url(#ddg)"/><path d="M688.0,97.5 h7 l-3.5,3.5 z" fill="#111"/><rect x="511" y="99" width="86" height="1" fill="#111"/><rect x="706" y="91" width="1.3" height="14" fill="#2d3035"/><rect x="707.3" y="91" width="1.2" height="14" fill="#f4f4f4"/><rect x="712" y="88" width="195.5" height="22" fill="#fff" stroke="#c8cbd0" stroke-width="0.6"/><rect x="892.5" y="89" width="14" height="20" fill="url(#ddg)"/><path d="M896.0,97.5 h7 l-3.5,3.5 z" fill="#111"/><rect x="719" y="99" width="88" height="1" fill="#111"/><rect x="913.5" y="91" width="1.3" height="14" fill="#2d3035"/><rect x="914.8" y="91" width="1.2" height="14" fill="#f4f4f4"/><rect x="920.5" y="89" width="94.5" height="20.5" fill="#fff" stroke="#c8cbd0" stroke-width="0.6"/><rect x="922.5" y="91" width="76.5" height="16.5" fill="#d2d2d2"/><path d="M1004.5,97.75 h7 l-3.5,3.5 z" fill="#111"/><rect x="1043.5" y="87.5" width="2" height="2" fill="#fff"/><rect x="1042.5" y="86.5" width="2" height="2" fill="#1e1e1e"/><rect x="1043.5" y="91.7" width="2" height="2" fill="#fff"/><rect x="1042.5" y="90.7" width="2" height="2" fill="#1e1e1e"/><rect x="1043.5" y="95.9" width="2" height="2" fill="#fff"/><rect x="1042.5" y="94.9" width="2" height="2" fill="#1e1e1e"/><rect x="1043.5" y="100.1" width="2" height="2" fill="#fff"/><rect x="1042.5" y="99.1" width="2" height="2" fill="#1e1e1e"/><rect x="1043.5" y="104.3" width="2" height="2" fill="#fff"/><rect x="1042.5" y="103.3" width="2" height="2" fill="#1e1e1e"/><rect x="1043.5" y="108.5" width="2" height="2" fill="#fff"/><rect x="1042.5" y="107.5" width="2" height="2" fill="#1e1e1e"/><circle cx="1057.1" cy="97.5" r="7" fill="#fff" stroke="#2a3a58" stroke-width="1.2"/><circle cx="1079.9" cy="97.5" r="7" fill="#cfd8e4" stroke="#2a3a58" stroke-width="1.2"/><path d="M1074.9,93.0 Q1079.9,106.5 1084.9,93.0" fill="none" stroke="#2a3a58" stroke-width="0.8"/><path d="M1073.9,99.5 Q1079.9,103.5 1085.9,99.5" fill="none" stroke="#6aaef0" stroke-width="1.5"/><circle cx="1103" cy="97.5" r="7" fill="#fff" stroke="#2a3a58" stroke-width="1.2"/><path d="M1098,93.0 Q1103,106.5 1108,93.0" fill="none" stroke="#2a3a58" stroke-width="0.8"/><circle cx="1125.8" cy="97.5" r="7.3" fill="url(#sph_b)"/><circle cx="1149" cy="97.5" r="7.3" fill="url(#sph_g)"/><circle cx="1171.8" cy="97.5" r="7.3" fill="url(#sph_s)"/><path d="M1166.8,93.5 Q1171.8,105.5 1176.8,93.5" fill="none" stroke="#5a6878" stroke-width="0.7"/><circle cx="1195.1" cy="97.5" r="7.3" fill="url(#sph_k)"/><circle cx="1217.9" cy="97.5" r="7" fill="#fff" stroke="#2a3a58" stroke-width="1.2"/><path d="M1212.9,93.0 Q1217.9,106.5 1222.9,93.0" fill="none" stroke="#2a3a58" stroke-width="0.8"/><circle cx="1241.1" cy="97.5" r="7" fill="#eef" stroke="#2a3a58" stroke-width="1.2"/><path d="M1236.1,93.0 Q1241.1,106.5 1246.1,93.0" fill="none" stroke="#2a3a58" stroke-width="0.8"/><circle cx="1263.9" cy="97.5" r="7" fill="#b8c2cc" stroke="#2a3a58" stroke-width="1.2"/><path d="M1258.9,93.0 Q1263.9,106.5 1268.9,93.0" fill="none" stroke="#2a3a58" stroke-width="0.8"/><path d="M1257.9,99.5 Q1263.9,103.5 1269.9,99.5" fill="none" stroke="#6aaef0" stroke-width="1.5"/></svg>
<span class="tx" style="left:178.90px;top:93.00px;font-size:11.13px;line-height:12px;font-family:'Liberation Sans', sans-serif;font-weight:normal;color:#000;transform:scaleX(0.9958);">Schrauben</span>
<span class="tx" style="left:393.20px;top:92.00px;font-size:11.13px;line-height:12px;font-family:'Liberation Sans', sans-serif;font-weight:normal;color:#000;transform:scaleX(0.9585);">VONLAYER</span>
<span class="tx" style="left:600.80px;top:92.00px;font-size:11.13px;line-height:12px;font-family:'Liberation Sans', sans-serif;font-weight:normal;color:#000;transform:scaleX(0.9669);">VONLAYER</span>
<span class="tx" style="left:810.80px;top:92.00px;font-size:11.13px;line-height:12px;font-family:'Liberation Sans', sans-serif;font-weight:normal;color:#000;transform:scaleX(0.9669);">VONLAYER</span>
<span class="tx" style="left:923.00px;top:92.00px;font-size:11.13px;line-height:12px;font-family:'Liberation Sans', sans-serif;font-weight:normal;color:#8c8c8c;transform:scaleX(0.9472);">VONFARBE</span>
<div class="a" style="left:33px;top:112px;width:1834px;height:20px;background:linear-gradient(#80858c,#a5a9ae 50%,#c3c6ca)"></div>
<svg width="1909" height="1080" viewBox="0 0 1909 1080"><path d="M38 130.5 L54.5 113.5 H118.5 L109 130.5 Z" fill="#5f6062" stroke="#d8dadc" stroke-width="0.8"/><path d="M109 132 L125 113 H259 V132 Z" fill="#fff"/><path d="M246.5 115.5 L254.5 123.5 M254.5 115.5 L246.5 123.5" stroke="#111" stroke-width="1.5"/><path d="M270.5 117 V127 M265.5 122 H275.5" stroke="#111" stroke-width="1.8"/><path d="M1850 119 h10 l-5 5 z" fill="#111"/></svg>
<span class="tx" style="left:60.60px;top:115.00px;font-size:11.54px;line-height:12px;font-family:'Liberation Sans', sans-serif;font-weight:normal;color:#f2f2f2;transform:scaleX(0.9368);">Start Page</span>
<span class="tx" style="left:131.50px;top:115.00px;font-size:11.54px;line-height:12px;font-family:'Liberation Sans', sans-serif;font-weight:normal;color:#000;transform:scaleX(0.9838);">Leo-Eigenbau-2021*</span>
<div class="a" style="left:0px;top:112px;width:33px;height:900px;background:#535353"></div>
<div class="a" style="left:0px;top:112px;width:33px;height:529px;background:linear-gradient(90deg,#babdc2,#a7abb1 55%,#82878e);border-radius:0 0 3px 3px"></div>
<div class="a" style="left:0px;top:641px;width:33px;height:334px;background:linear-gradient(90deg,#babdc2,#a7abb1 55%,#82878e);border-radius:0 0 3px 3px"></div>
<div class="a" style="left:1866px;top:112px;width:36px;height:905px;background:#535353"></div>
<div class="a" style="left:1867px;top:112px;width:35px;height:734px;background:linear-gradient(90deg,#b3b6bc,#a6aab0 55%,#8d9299);border-radius:3px"></div>
<svg width="1909" height="1080" viewBox="0 0 1909 1080"><rect x="2.5" y="118" width="2" height="2" fill="#fff"/><rect x="1.5" y="117" width="2" height="2" fill="#1e1e1e"/><rect x="6.7" y="118" width="2" height="2" fill="#fff"/><rect x="5.7" y="117" width="2" height="2" fill="#1e1e1e"/><rect x="10.9" y="118" width="2" height="2" fill="#fff"/><rect x="9.9" y="117" width="2" height="2" fill="#1e1e1e"/><rect x="15.100000000000001" y="118" width="2" height="2" fill="#fff"/><rect x="14.100000000000001" y="117" width="2" height="2" fill="#1e1e1e"/><rect x="19.3" y="118" width="2" height="2" fill="#fff"/><rect x="18.3" y="117" width="2" height="2" fill="#1e1e1e"/><rect x="23.5" y="118" width="2" height="2" fill="#fff"/><rect x="22.5" y="117" width="2" height="2" fill="#1e1e1e"/><rect x="27.700000000000003" y="118" width="2" height="2" fill="#fff"/><rect x="26.700000000000003" y="117" width="2" height="2" fill="#1e1e1e"/><rect x="31.5" y="113" width="1" height="12" fill="#555"/><path d="M8 137 L19 126" stroke="#1a3a6a" stroke-width="1.6"/><rect x="6.5" y="135.5" width="3" height="3" fill="#fff" stroke="#2a6fd0" stroke-width="1.1"/><rect x="17.5" y="124.5" width="3" height="3" fill="#fff" stroke="#2a6fd0" stroke-width="1.1"/><path d="M21,139 h-4 l4,-4 z" fill="#111"/><path d="M10.5 150.5 C5 151 4 158 10.5 158 H18.5" fill="none" stroke="#1a3a6a" stroke-width="1.3"/><rect x="9.0" y="149.0" width="3" height="3" fill="#fff" stroke="#2a6fd0" stroke-width="1.1"/><rect x="9.0" y="156.5" width="3" height="3" fill="#fff" stroke="#2a6fd0" stroke-width="1.1"/><rect x="17.0" y="156.5" width="3" height="3" fill="#fff" stroke="#2a6fd0" stroke-width="1.1"/><path d="M7 172 L17 181 M10 169 L20 178" stroke="#1a3a6a" stroke-width="1.8"/><rect x="5.5" y="169.5" width="3" height="3" fill="#fff" stroke="#2a6fd0" stroke-width="1.1"/><rect x="17.5" y="178.5" width="3" height="3" fill="#fff" stroke="#2a6fd0" stroke-width="1.1"/><path d="M7 203 C10 190 14 208 19 193" fill="none" stroke="#1a3a6a" stroke-width="1.6"/><rect x="5.5" y="201.5" width="3" height="3" fill="#fff" stroke="#2a6fd0" stroke-width="1.1"/><rect x="17.5" y="191.5" width="3" height="3" fill="#fff" stroke="#2a6fd0" stroke-width="1.1"/><path d="M5.5 213 C10 214 12 218 9 222 C6 226 7 228 10 227" fill="none" stroke="#1a3a6a" stroke-width="1.4"/><path d="M11 226 L20 218" stroke="#f0b040" stroke-width="3.3"/><rect x="6" y="234.7" width="15" height="0.8" fill="#80848a"/><rect x="6" y="235.5" width="15" height="1.5" fill="#f8f8f8"/><circle cx="14" cy="250" r="6.5" fill="#fff" stroke="#556" stroke-width="1.8"/><circle cx="12" cy="248" r="1" fill="#2a6fd0"/><path d="M22,258 h-4 l4,-4 z" fill="#111"/><path d="M7 279 Q9 265 20 264" fill="none" stroke="#1a3a6a" stroke-width="1.5"/><rect x="5.5" y="277.5" width="3" height="3" fill="#fff" stroke="#2a6fd0" stroke-width="1.1"/><rect x="18.5" y="262.5" width="3" height="3" fill="#fff" stroke="#2a6fd0" stroke-width="1.1"/><path d="M22,280 h-4 l4,-4 z" fill="#111"/><ellipse cx="14" cy="293.5" rx="7" ry="4.5" fill="#fff" stroke="#1a3a6a" stroke-width="1.5"/><path d="M22,301 h-4 l4,-4 z" fill="#111"/><path d="M9 320 Q4 311 12 309 Q20 309 18 316" fill="none" stroke="#1a3a6a" stroke-width="1.5"/><rect x="7.5" y="318.5" width="3" height="3" fill="#fff" stroke="#2a6fd0" stroke-width="1.1"/><rect x="16.5" y="314.5" width="3" height="3" fill="#fff" stroke="#2a6fd0" stroke-width="1.1"/><path d="M22,322 h-4 l4,-4 z" fill="#111"/><rect x="6" y="330.7" width="15" height="0.8" fill="#80848a"/><rect x="6" y="331.5" width="15" height="1.5" fill="#f8f8f8"/><rect x="11.5" y="343.5" width="3" height="3" fill="#fff" stroke="#1a3a6a" stroke-width="1"/><rect x="6" y="359.7" width="15" height="0.8" fill="#80848a"/><rect x="6" y="360.5" width="15" height="1.5" fill="#f8f8f8"/><g fill="none" stroke="#5a5a5a" stroke-width="1.5"><ellipse cx="13" cy="369.5" rx="7.5" ry="1.8" transform="rotate(-6 13 369.5)"/><ellipse cx="13" cy="374.5" rx="7.5" ry="1.8" transform="rotate(-6 13 374.5)"/><ellipse cx="13" cy="379.5" rx="7.5" ry="1.8" transform="rotate(-6 13 379.5)"/></g><g fill="none" stroke="#c8c8c8" stroke-width="0.6"><ellipse cx="13" cy="369.5" rx="6" ry="0.8"/><ellipse cx="13" cy="374.5" rx="6" ry="0.8"/><ellipse cx="13" cy="379.5" rx="6" ry="0.8"/></g><rect x="6.5" y="393.5" width="13" height="9" fill="#eef0f8" stroke="#223a5e" stroke-width="1.3"/><circle cx="6.5" cy="402" r="1.4" fill="#fff" stroke="#2a6fd0" stroke-width="0.9"/><circle cx="19.5" cy="393.5" r="1.4" fill="#fff" stroke="#2a6fd0" stroke-width="0.9"/><path d="M21,406 h-4 l4,-4 z" fill="#111"/><defs><pattern id="lhp" patternUnits="userSpaceOnUse" width="3" height="3"><path d="M0,3 L3,0" stroke="#1a4fc0" stroke-width="1.1"/></pattern></defs><rect x="5" y="412" width="16" height="15" fill="url(#lhp)"/><path d="M9 415.5 H14 V418.5 H18 V424 H9 Z" fill="#b4b7bd" stroke="#2a6fd0" stroke-width="1.3"/><path d="M8 448 C5 448 5 443 7 442 C5 440 7 435 10 436.5 C12 434 16 435 16.5 437.5 C20 437.5 20.5 441.5 19 443 C20.5 446 18 449 15.5 448 C13.5 450 10 450 8 448 Z" fill="#eef2fa" stroke="#2a3a5a" stroke-width="1.1"/><rect x="6" y="455.2" width="15" height="0.8" fill="#80848a"/><rect x="6" y="456.0" width="15" height="1.5" fill="#f8f8f8"/><circle cx="13.5" cy="471" r="6.3" fill="#fff" stroke="#555" stroke-width="1.8"/><circle cx="13.5" cy="471" r="2.5" fill="#777"/><path d="M7 484 h12 v6 l-4 2 h-8 z" fill="#fff" stroke="#333" stroke-width="1.3"/><path d="M14 492 L20 495" stroke="#555" stroke-width="1.3"/><path d="M9 520 V510 L13 505 H21" fill="none" stroke="#1a3a6a" stroke-width="3"/><path d="M9 520 V510 L13 505 H21" fill="none" stroke="#c8d8f0" stroke-width="1"/><rect x="6" y="528.7" width="15" height="0.8" fill="#80848a"/><rect x="6" y="529.5" width="15" height="1.5" fill="#f8f8f8"/><rect x="7.5" y="540.5" width="11" height="8" fill="#fff" stroke="#1a3a6a" stroke-width="1.2"/><circle cx="17" cy="549" r="4" fill="#fff" stroke="#1a3a6a" stroke-width="1.2"/><rect x="6.0" y="545.0" width="3" height="3" fill="#fff" stroke="#2a6fd0" stroke-width="1.1"/><rect x="6" y="560.7" width="15" height="0.8" fill="#80848a"/><rect x="6" y="561.5" width="15" height="1.5" fill="#f8f8f8"/><rect x="7.5" y="569.5" width="12" height="11" fill="#fff" stroke="#333" stroke-width="1.2"/><path d="M8 577 L15 570 M8 573 L11 570 M11 580 L19 572 M15 580 L19 576" stroke="#333" stroke-width="1"/><path d="M22,583 h-4 l4,-4 z" fill="#111"/><text x="6.5" y="602.5" font-family="Liberation Sans" font-weight="bold" font-size="14.5" fill="#2a55b0">A</text><rect x="6" y="604" width="14" height="1.3" fill="#222"/><text x="6.5" y="625" font-family="Liberation Sans" font-weight="bold" font-size="14.5" fill="#2a55b0">A</text><rect x="2.5" y="650.5" width="2" height="2" fill="#fff"/><rect x="1.5" y="649.5" width="2" height="2" fill="#1e1e1e"/><rect x="6.7" y="650.5" width="2" height="2" fill="#fff"/><rect x="5.7" y="649.5" width="2" height="2" fill="#1e1e1e"/><rect x="10.9" y="650.5" width="2" height="2" fill="#fff"/><rect x="9.9" y="649.5" width="2" height="2" fill="#1e1e1e"/><rect x="15.100000000000001" y="650.5" width="2" height="2" fill="#fff"/><rect x="14.100000000000001" y="649.5" width="2" height="2" fill="#1e1e1e"/><rect x="19.3" y="650.5" width="2" height="2" fill="#fff"/><rect x="18.3" y="649.5" width="2" height="2" fill="#1e1e1e"/><rect x="23.5" y="650.5" width="2" height="2" fill="#fff"/><rect x="22.5" y="649.5" width="2" height="2" fill="#1e1e1e"/><rect x="27.700000000000003" y="650.5" width="2" height="2" fill="#fff"/><rect x="26.700000000000003" y="649.5" width="2" height="2" fill="#1e1e1e"/><path d="M6.5 665 C6 659 12 656.5 17 659.5" fill="none" stroke="#1a5fc8" stroke-width="3"/><path d="M14 655.5 L20 660 L14.5 663 Z" fill="#1a5fc8"/><path d="M20.5 664 C21 670 15 673 10 670" fill="none" stroke="#1a5fc8" stroke-width="3"/><path d="M13 673.5 L6.5 669.5 L12 666 Z" fill="#1a5fc8"/><path d="M17 672 h4.5 v-4.5 z" fill="#111"/><rect x="6" y="678.2" width="15" height="0.8" fill="#80848a"/><rect x="6" y="679.0" width="15" height="1.5" fill="#f8f8f8"/><path d="M9.5 700 C7 698 5.5 694 6.5 691.5 L8 692.5 L8 687 C8 686 9.5 686 9.5 687 L10 691 L10.5 685.5 C10.5 684.5 12 684.5 12 685.5 L12.5 690.5 L13 686 C13 685 14.5 685 14.5 686 L15 691 L16 688 C16.5 687 17.8 687.5 17.5 688.5 L16.5 695 C16 699 14.5 701 12 701 Z" fill="#fff" stroke="#333" stroke-width="0.9"/><rect x="11" y="694.5" width="3.5" height="3.5" fill="#cfe0f8" stroke="#2a6fd0" stroke-width="0.8"/><circle cx="11.5" cy="713" r="4.5" fill="none" stroke="#2a6fd0" stroke-width="1.2"/><path d="M11.5 709 v4 h4" fill="none" stroke="#2a6fd0" stroke-width="1"/><circle cx="17.5" cy="720" r="2.5" fill="none" stroke="#2a6fd0" stroke-width="1.2"/><path d="M19.3,721.8 l2.5,2.5" stroke="#2a6fd0" stroke-width="1.4"/><path d="M6.5 734.5 L10.5 731 V733 H15.5 V736 H10.5 V738 Z" fill="none" stroke="#2a6fd0" stroke-width="1.1"/><circle cx="14.5" cy="741" r="2.5" fill="none" stroke="#2a6fd0" stroke-width="1.2"/><path d="M16.3,742.8 l2.5,2.5" stroke="#2a6fd0" stroke-width="1.4"/><path d="M8.5 751.5 h5 l2 2 v8 h-7 z" fill="none" stroke="#2a6fd0" stroke-width="1.2"/><circle cx="17" cy="762" r="2.5" fill="none" stroke="#2a6fd0" stroke-width="1.2"/><path d="M18.8,763.8 l2.5,2.5" stroke="#2a6fd0" stroke-width="1.4"/><circle cx="15" cy="779" r="6" fill="#fff" stroke="#555" stroke-width="1.8"/><path d="M11 785 L6 790" stroke="#555" stroke-width="2.5"/><path d="M12 782 L18 776 M18 776 h-4 M18 776 v4" stroke="#2a6fd0" stroke-width="1.4" fill="none"/><rect x="7.5" y="796.5" width="9" height="9" fill="none" stroke="#2a6fd0" stroke-width="1.2"/><path d="M12 798 v6 M9 801 h6" stroke="#111" stroke-width="1.2"/><circle cx="18" cy="807" r="2.5" fill="none" stroke="#2a6fd0" stroke-width="1.2"/><path d="M19.8,808.8 l2.5,2.5" stroke="#2a6fd0" stroke-width="1.4"/><path d="M8 822 l4 -3 h6 v8 l-4 3 h-6 z" fill="#f0f0f0" stroke="#999" stroke-width="0.8"/><path d="M8 822 h6 v8 M14 822 l4 -3" fill="none" stroke="#aaa" stroke-width="0.8"/><circle cx="18" cy="829" r="2.5" fill="none" stroke="#2a6fd0" stroke-width="1.2"/><path d="M19.8,830.8 l2.5,2.5" stroke="#2a6fd0" stroke-width="1.4"/><rect x="7.5" y="841.5" width="11" height="9" fill="none" stroke="#2a6fd0" stroke-width="1.2"/><circle cx="18" cy="852" r="2.5" fill="none" stroke="#2a6fd0" stroke-width="1.2"/><path d="M19.8,853.8 l2.5,2.5" stroke="#2a6fd0" stroke-width="1.4"/><rect x="6" y="862.2" width="15" height="0.8" fill="#80848a"/><rect x="6" y="863.0" width="15" height="1.5" fill="#f8f8f8"/><rect x="9.5" y="869.5" width="6" height="6" fill="none" stroke="#2a6fd0" stroke-width="1.2"/><path d="M12.5 871 v3 M11 872.5 h3" stroke="#2a6fd0"/><circle cx="18" cy="879" r="2.5" fill="none" stroke="#2a6fd0" stroke-width="1.2"/><path d="M19.8,880.8 l2.5,2.5" stroke="#2a6fd0" stroke-width="1.4"/><rect x="9.5" y="893.5" width="6" height="4" fill="none" stroke="#2a6fd0" stroke-width="1.2"/><circle cx="18" cy="901" r="2.5" fill="none" stroke="#2a6fd0" stroke-width="1.2"/><path d="M19.8,902.8 l2.5,2.5" stroke="#2a6fd0" stroke-width="1.4"/><rect x="6" y="912.2" width="15" height="0.8" fill="#80848a"/><rect x="6" y="913.0" width="15" height="1.5" fill="#f8f8f8"/><path d="M7 921 L18 932 M7 921 h4 M7 921 v4" stroke="#2a6fd0" stroke-width="1.3" fill="none"/><circle cx="18" cy="932" r="2.5" fill="none" stroke="#2a6fd0" stroke-width="1.2"/><path d="M19.8,933.8 l2.5,2.5" stroke="#2a6fd0" stroke-width="1.4"/><ellipse cx="14" cy="954" rx="7" ry="4.5" fill="#555"/><circle cx="14" cy="954" r="2.3" fill="#ddd"/><g stroke="#f5a623" stroke-width="1.3"><path d="M10 943 v7 M6.5 946.5 h7 M7.5 944 l5 5 M12.5 944 l-5 5"/></g><rect x="1873.0" y="117.5" width="2" height="2" fill="#fff"/><rect x="1872.0" y="116.5" width="2" height="2" fill="#1e1e1e"/><rect x="1877.2" y="117.5" width="2" height="2" fill="#fff"/><rect x="1876.2" y="116.5" width="2" height="2" fill="#1e1e1e"/><rect x="1881.4" y="117.5" width="2" height="2" fill="#fff"/><rect x="1880.4" y="116.5" width="2" height="2" fill="#1e1e1e"/><rect x="1885.6" y="117.5" width="2" height="2" fill="#fff"/><rect x="1884.6" y="116.5" width="2" height="2" fill="#1e1e1e"/><rect x="1889.8" y="117.5" width="2" height="2" fill="#fff"/><rect x="1888.8" y="116.5" width="2" height="2" fill="#1e1e1e"/><rect x="1894.0" y="117.5" width="2" height="2" fill="#fff"/><rect x="1893.0" y="116.5" width="2" height="2" fill="#1e1e1e"/><rect x="1898.2" y="117.5" width="2" height="2" fill="#fff"/><rect x="1897.2" y="116.5" width="2" height="2" fill="#1e1e1e"/><path d="M1883 125 V141 M1875 133 H1891" stroke="#2a3a5a" stroke-width="1.3"/><path d="M1883 124 l-2.5 3 h5 z M1883 142 l-2.5 -3 h5 z M1874 133 l3 -2.5 v5 z M1892 133 l-3 -2.5 v5 z" fill="#2a3a5a"/><circle cx="1878" cy="149" r="2.5" fill="none" stroke="#2a6fd0" stroke-width="1.2"/><circle cx="1880" cy="157" r="3" fill="none" stroke="#22334a" stroke-width="1.3"/><circle cx="1887" cy="157" r="3" fill="none" stroke="#22334a" stroke-width="1.3"/><path d="M1880 150 Q1885 150 1886 153" fill="none" stroke="#2a6fd0"/><path d="M1888 170.5 H1881 A5.8 5.8 0 0 0 1881 181.5 H1888" fill="none" stroke="#22334a" stroke-width="1.2"/><path d="M1888 173.5 H1882 A2.8 2.8 0 0 0 1882 179 H1888" fill="none" stroke="#2a6fd0" stroke-width="1.2"/><rect x="1875.5" y="191.5" width="14" height="14" fill="none" stroke="#2a6fd0" stroke-width="1.3"/><rect x="1875.5" y="198.5" width="7" height="7" fill="none" stroke="#22334a" stroke-width="1.3"/><path d="M1877 214.5 L1888 225.5 M1888 214.5 L1877 225.5" stroke="#e8290f" stroke-width="3"/><rect x="1876" y="234.7" width="14" height="0.8" fill="#80848a"/><rect x="1876" y="235.5" width="14" height="1.5" fill="#f8f8f8"/><path d="M1888 245 A7 7 0 1 0 1889 252" fill="none" stroke="#333" stroke-width="1.5"/><path d="M1886 241 l4 4 l-5 1z" fill="#333"/><path d="M1876 268 A7 4 0 0 0 1890 268" fill="none" stroke="#1a5fc8" stroke-width="2"/><path d="M1876 265 l0 4 l3 -1z" fill="#1a5fc8"/><path d="M1883 262 V278" stroke="#f03" stroke-width="1" stroke-dasharray="2 1"/><rect x="1876" y="286.7" width="14" height="0.8" fill="#80848a"/><rect x="1876" y="287.5" width="14" height="1.5" fill="#f8f8f8"/><path d="M1882 295 L1875 309 H1882 Z" fill="none" stroke="#333" stroke-width="1.2"/><path d="M1884 295 L1891 309 H1884 Z" fill="#bbb" stroke="#333" stroke-width="1"/><path d="M1875 330 L1880 318 L1883 330 Z M1891 330 L1886 318 L1883 330Z" fill="#fff" stroke="#2a8a3a" stroke-width="1.3"/><path d="M1876 318 L1890 330" stroke="#e33" stroke-width="1"/><rect x="1876" y="338.7" width="14" height="0.8" fill="#80848a"/><rect x="1876" y="339.5" width="14" height="1.5" fill="#f8f8f8"/><g fill="none" stroke="#2a6fd0" stroke-width="1.2"><rect x="1875.5" y="346.5" width="5" height="5"/><rect x="1884.5" y="346.5" width="5" height="5"/><rect x="1884.5" y="355.5" width="5" height="5"/></g><rect x="1875.5" y="355.5" width="5" height="5" fill="none" stroke="#333" stroke-width="1.2"/><path d="M1876 378 Q1883 382 1890 370" fill="none" stroke="#333" stroke-width="1.4"/><circle cx="1879" cy="373" r="1.8" fill="none" stroke="#333"/><circle cx="1884" cy="371" r="1.8" fill="none" stroke="#333"/><circle cx="1889" cy="368" r="1.8" fill="none" stroke="#2a6fd0"/><g fill="none" stroke-width="1.1"><rect x="1879.5" y="388.5" width="4" height="4" stroke="#333"/><rect x="1885.5" y="388.5" width="4" height="4" stroke="#333"/><rect x="1879.5" y="394.5" width="4" height="4" stroke="#333"/><rect x="1885.5" y="394.5" width="4" height="4" stroke="#333"/><rect x="1874.5" y="394.5" width="4" height="4" stroke="#2a6fd0"/><rect x="1874.5" y="400.5" width="4" height="4" stroke="#2a6fd0"/><rect x="1880.5" y="400.5" width="4" height="4" stroke="#2a6fd0"/></g><rect x="1876" y="412.7" width="14" height="0.8" fill="#80848a"/><rect x="1876" y="413.5" width="14" height="1.5" fill="#f8f8f8"/><path d="M1878 423 V433 H1888 V423 M1881 420 V426 M1885 420 V426" fill="none" stroke="#2a3ab0" stroke-width="1.3"/><path d="M1878 444 H1876 V456 H1878 M1888 444 H1890 V456 H1888" fill="none" stroke="#2a9a3a" stroke-width="2.2"/><path d="M1876 444 H1890 M1876 456 H1890" stroke="#2a9a3a" stroke-width="1"/><path d="M1874 465 L1892 468" stroke="#333" stroke-width="1.2"/><path d="M1880 467 L1884 478 M1886 467 L1880 478" stroke="#2a6fd0" stroke-width="1.2"/><circle cx="1879" cy="478" r="2" fill="none" stroke="#2a6fd0"/><circle cx="1885" cy="478" r="2" fill="none" stroke="#2a6fd0"/><rect x="1876" y="486.7" width="14" height="0.8" fill="#80848a"/><rect x="1876" y="487.5" width="14" height="1.5" fill="#f8f8f8"/><path d="M1876 496 h10 l4 -4 M1876 496 v10 h10 v-10 M1886 506 l4 -4 v-10 h-10 l-4 4" fill="none" stroke="#999" stroke-width="1"/><path d="M1876 506 L1886 506 L1890 502" stroke="#2a3a5a" stroke-width="1.3" fill="none"/><rect x="1876" y="516.7" width="14" height="0.8" fill="#80848a"/><rect x="1876" y="517.5" width="14" height="1.5" fill="#f8f8f8"/><rect x="1885.5" y="523.5" width="5" height="16" fill="none" stroke="#2a4ab0" stroke-width="1.3"/><rect x="1876.5" y="531.5" width="5" height="8" fill="none" stroke="#2a4ab0" stroke-width="1.3"/><path d="M1878 529 L1888 522" stroke="#2a4ab0" stroke-dasharray="1.5 1" stroke-width="0.9"/><rect x="1876" y="546.4000000000001" width="14" height="0.8" fill="#80848a"/><rect x="1876" y="547.2" width="14" height="1.5" fill="#f8f8f8"/><path d="M1876 564.5 H1890" stroke="#2a6fd0" stroke-width="1.2" stroke-dasharray="3 1.5"/><path d="M1888 553 V563 M1883 556 H1888" stroke="#2a6fd0" stroke-width="1.2"/><path d="M1884 556 l3-2 v4z" fill="#2a6fd0"/><path d="M1891 567 h-5 l5 -5z" fill="#111"/><rect x="1876" y="575.7" width="14" height="0.8" fill="#80848a"/><rect x="1876" y="576.5" width="14" height="1.5" fill="#f8f8f8"/><path d="M1878 583 V596 M1883 583 V596 M1888 583 V596 M1875 587 H1891" stroke="#333" stroke-width="1.1"/><rect x="1875" y="592" width="16" height="3" fill="#f07000"/><path d="M1875 596 H1891" stroke="#111" stroke-width="2"/><rect x="1876" y="605.7" width="14" height="0.8" fill="#80848a"/><rect x="1876" y="606.5" width="14" height="1.5" fill="#f8f8f8"/><path d="M1877 630 V622 Q1877 613 1888 613" fill="none" stroke="#2a6fd0" stroke-width="1.4"/><path d="M1891 629 h-5 l5 -5z" fill="#111"/><rect x="1876" y="636.7" width="14" height="0.8" fill="#80848a"/><rect x="1876" y="637.5" width="14" height="1.5" fill="#f8f8f8"/><path d="M1876 657 Q1876 648 1885 650 Q1880 656 1880 660" fill="none" stroke="#2a4ab0" stroke-width="1.3"/><circle cx="1876.5" cy="657.5" r="1.3" fill="#fff" stroke="#2a4ab0"/><path d="M1881 660 L1891 650" stroke="#f0b040" stroke-width="3.5"/><path d="M1876 680 Q1880 668 1888 668" fill="none" stroke="#22334a" stroke-width="1.6"/><circle cx="1876.5" cy="680.5" r="1.3" fill="#fff" stroke="#2a4ab0"/><path d="M1881 681 L1891 671" stroke="#f0b040" stroke-width="3.5"/><text x="1874" y="701" font-family="Liberation Sans" font-weight="bold" font-size="13" fill="#2a55b0">A</text><path d="M1882 703 L1892 693" stroke="#f0b040" stroke-width="3.5"/><rect x="1876" y="711.2" width="14" height="0.8" fill="#80848a"/><rect x="1876" y="712.0" width="14" height="1.5" fill="#f8f8f8"/><path d="M1876 719 L1889 731" stroke="#d02020" stroke-width="4.5"/><path d="M1874 721 l4 -4 l2 2z" fill="#f5c030"/><path d="M1876 717 L1880 721" stroke="#ffd040" stroke-width="2"/><path d="M1876 741 L1889 753" stroke="#d02020" stroke-width="4.5"/><path d="M1876 739 L1880 743" stroke="#ffd040" stroke-width="2"/><circle cx="1889" cy="741" r="4.5" fill="#2aa84a"/><path d="M1889 738.5 v5 M1886.5 741 h5" stroke="#fff" stroke-width="1.4"/><rect x="1876" y="762.7" width="14" height="0.8" fill="#80848a"/><rect x="1876" y="763.5" width="14" height="1.5" fill="#f8f8f8"/><rect x="1876.5" y="774.5" width="10" height="9" fill="none" stroke="#bbb" stroke-width="1.2"/><rect x="1880.5" y="767.5" width="10" height="10" fill="none" stroke="#2a9a3a" stroke-width="1.3"/><rect x="1875.5" y="792.5" width="10" height="10" fill="#fff" stroke="#2a6fd0" stroke-width="1.1"/><path d="M1876 802 L1885 793" stroke="#2a6fd0"/><rect x="1882" y="788" width="9" height="7" fill="#333"/><rect x="1882" y="788" width="3" height="3" fill="#e22"/><rect x="1876" y="813" width="14" height="16" fill="#fff" stroke="#2a5aa0" stroke-width="1"/><rect x="1876" y="813" width="14" height="2.5" fill="#2a5aa0"/><circle cx="1879.5" cy="819.5" r="1.3" fill="none" stroke="#333" stroke-width="0.8"/><circle cx="1879.5" cy="825" r="1.3" fill="none" stroke="#333" stroke-width="0.8"/><path d="M1882 819.5 h6 M1882 825 h6" stroke="#333"/></svg>
<div class="a" style="left:33px;top:132px;width:1834px;height:863px;background:#000"></div>
<svg width="1909" height="1080" viewBox="0 0 1909 1080" style="shape-rendering:auto">
<defs>
<pattern id="hg" patternUnits="userSpaceOnUse" width="17" height="17" x="3" y="0"><path d="M-17,17 L17,-17 M0,17 L17,0 M0,34 L34,0" stroke="#00c86a" stroke-width="1.1" fill="none"/></pattern>
<pattern id="ho" patternUnits="userSpaceOnUse" width="13" height="13" x="5" y="0"><path d="M-13,13 L13,-13 M0,13 L13,0 M0,26 L26,0" stroke="#eaa200" stroke-width="1.1" fill="none"/></pattern>
<pattern id="hb" patternUnits="userSpaceOnUse" width="11.6" height="11.6" x="2" y="0"><path d="M0,0 L11.6,11.6 M-11.6,0 L11.6,23.2 M0,-11.6 L23.2,11.6" stroke="#1a8cff" stroke-width="1.1" fill="none"/></pattern>
<pattern id="hd" patternUnits="userSpaceOnUse" width="8" height="8" x="1" y="0"><path d="M-8,8 L8,-8 M0,8 L8,0 M0,16 L16,0" stroke="#3cb000" stroke-width="1.1" fill="none"/></pattern>
</defs>
<rect x="33" y="580" width="1834" height="2" fill="#929292"/>
<rect x="1117" y="267" width="1" height="628" fill="#bdbdbd"/>
<rect x="464" y="164" width="1" height="148" fill="#f0f0f0"/>
<rect x="391" y="237" width="148" height="1" fill="#f0f0f0"/>
<rect x="458.5" y="231.5" width="12" height="12" fill="none" stroke="#f0f0f0" stroke-width="1"/>
<polyline points="64.20,828.00 70.50,836.00 77.50,828.00" fill="none" stroke="#d8d8d8" stroke-width="1" /><line x1="70.5" y1="836" x2="70.5" y2="844" stroke="#d8d8d8" stroke-width="1"/>
<polygon points="70.50,860.00 62.50,884.50 78.50,884.50" fill="none" stroke="#d8d8d8" stroke-width="1" />
<line x1="70.5" y1="884.5" x2="70.5" y2="957.5" stroke="#d8d8d8" stroke-width="1"/><line x1="70.5" y1="957.5" x2="143.5" y2="957.5" stroke="#d8d8d8" stroke-width="1"/>
<polygon points="143.50,949.50 167.50,957.50 143.50,965.50" fill="none" stroke="#d8d8d8" stroke-width="1" />
<rect x="62.5" y="949.5" width="16" height="16" fill="none" stroke="#d8d8d8"/>
<line x1="185.5" y1="949.5" x2="198.5" y2="965" stroke="#d8d8d8" stroke-width="1"/><line x1="198.5" y1="949.5" x2="185.5" y2="965" stroke="#d8d8d8" stroke-width="1"/>
<clipPath id="cg0"><polygon points="486.50,375.50 525.50,375.50 525.50,380.50 541.50,380.50 541.50,375.50 580.50,375.50 588.20,447.60 606.50,460.00 606.50,515.50 585.50,515.50 585.50,463.50 582.00,463.50 578.00,459.50 571.50,401.50 569.00,396.50 564.50,394.50 486.50,387.50"/></clipPath><rect x="0" y="0" width="1909" height="1080" fill="url(#hg)" clip-path="url(#cg0)"/>
<clipPath id="cg1"><polygon points="726.50,375.50 687.50,375.50 687.50,380.50 671.50,380.50 671.50,375.50 632.50,375.50 624.80,447.60 606.50,460.00 606.50,515.50 627.50,515.50 627.50,463.50 631.00,463.50 635.00,459.50 641.50,401.50 644.00,396.50 648.50,394.50 726.50,387.50"/></clipPath><rect x="0" y="0" width="1909" height="1080" fill="url(#hg)" clip-path="url(#cg1)"/>
<clipPath id="cg2"><polygon points="486.50,786.50 525.50,786.50 525.50,781.50 541.50,781.50 541.50,786.50 580.50,786.50 588.20,714.40 606.50,702.00 606.50,646.50 585.50,646.50 585.50,698.50 582.00,698.50 578.00,702.50 571.50,760.50 569.00,765.50 564.50,767.50 486.50,774.50"/></clipPath><rect x="0" y="0" width="1909" height="1080" fill="url(#hg)" clip-path="url(#cg2)"/>
<clipPath id="cg3"><polygon points="726.50,786.50 687.50,786.50 687.50,781.50 671.50,781.50 671.50,786.50 632.50,786.50 624.80,714.40 606.50,702.00 606.50,646.50 627.50,646.50 627.50,698.50 631.00,698.50 635.00,702.50 641.50,760.50 644.00,765.50 648.50,767.50 726.50,774.50"/></clipPath><rect x="0" y="0" width="1909" height="1080" fill="url(#hg)" clip-path="url(#cg3)"/>
<clipPath id="co0"><polygon points="627.50,465.50 648.50,465.50 648.50,539.00 570.50,539.00 570.50,530.00 578.50,530.00 578.50,520.00 564.50,520.00 564.50,516.00 585.50,516.00 585.50,515.50 627.50,515.50"/></clipPath><rect x="0" y="0" width="1909" height="1080" fill="url(#ho)" clip-path="url(#co0)"/>
<clipPath id="co1"><polygon points="627.50,696.50 648.50,696.50 648.50,623.00 570.50,623.00 570.50,632.00 578.50,632.00 578.50,642.00 564.50,642.00 564.50,646.00 585.50,646.00 585.50,646.50 627.50,646.50"/></clipPath><rect x="0" y="0" width="1909" height="1080" fill="url(#ho)" clip-path="url(#co1)"/>
<clipPath id="cb0"><polygon points="536.00,516.50 564.50,516.50 564.50,547.00 534.50,547.00 529.50,552.00 529.50,581.00 495.50,581.00 495.50,573.00 498.00,562.00 503.00,554.00 510.00,549.50 530.00,542.50 532.50,538.50 532.50,520.00"/></clipPath><rect x="0" y="0" width="1909" height="1080" fill="url(#hb)" clip-path="url(#cb0)"/>
<clipPath id="cb1"><polygon points="536.00,645.50 564.50,645.50 564.50,615.00 534.50,615.00 529.50,610.00 529.50,581.00 495.50,581.00 495.50,589.00 498.00,600.00 503.00,608.00 510.00,612.50 530.00,619.50 532.50,623.50 532.50,642.00"/></clipPath><rect x="0" y="0" width="1909" height="1080" fill="url(#hb)" clip-path="url(#cb1)"/>
<clipPath id="cd0"><polygon points="564.50,540.00 591.50,540.00 591.50,547.50 564.50,547.50"/></clipPath><rect x="0" y="0" width="1909" height="1080" fill="url(#hd)" clip-path="url(#cd0)"/>
<clipPath id="ce0"><polygon points="564.50,622.00 591.50,622.00 591.50,614.50 564.50,614.50"/></clipPath><rect x="0" y="0" width="1909" height="1080" fill="url(#hd)" clip-path="url(#ce0)"/>
<clipPath id="cd1"><polygon points="564.50,553.00 591.50,553.00 591.50,561.00 564.50,561.00"/></clipPath><rect x="0" y="0" width="1909" height="1080" fill="url(#hd)" clip-path="url(#cd1)"/>
<clipPath id="ce1"><polygon points="564.50,609.00 591.50,609.00 591.50,601.00 564.50,601.00"/></clipPath><rect x="0" y="0" width="1909" height="1080" fill="url(#hd)" clip-path="url(#ce1)"/>
<clipPath id="cd2"><polygon points="622.50,540.00 648.50,540.00 648.50,547.50 622.50,547.50"/></clipPath><rect x="0" y="0" width="1909" height="1080" fill="url(#hd)" clip-path="url(#cd2)"/>
<clipPath id="ce2"><polygon points="622.50,622.00 648.50,622.00 648.50,614.50 622.50,614.50"/></clipPath><rect x="0" y="0" width="1909" height="1080" fill="url(#hd)" clip-path="url(#ce2)"/>
<clipPath id="cd3"><polygon points="622.50,553.00 648.50,553.00 648.50,561.00 622.50,561.00"/></clipPath><rect x="0" y="0" width="1909" height="1080" fill="url(#hd)" clip-path="url(#cd3)"/>
<clipPath id="ce3"><polygon points="622.50,609.00 648.50,609.00 648.50,601.00 622.50,601.00"/></clipPath><rect x="0" y="0" width="1909" height="1080" fill="url(#hd)" clip-path="url(#ce3)"/>
<rect x="572" y="483" width="69" height="13" fill="#000"/>
<rect x="572" y="666.0" width="69" height="13" fill="#000"/>
<rect x="533" y="522.5" width="41" height="5" fill="#000"/>
<rect x="533" y="634.5" width="41" height="5" fill="#000"/>
<polyline points="486.50,375.50 486.50,347.50 580.50,347.50 580.50,375.50 541.50,375.50 541.50,380.50 525.50,380.50 525.50,375.50 486.50,375.50" fill="none" stroke="#5363a6" stroke-width="1" /><polyline points="486.50,786.50 486.50,814.50 580.50,814.50 580.50,786.50 541.50,786.50 541.50,781.50 525.50,781.50 525.50,786.50 486.50,786.50" fill="none" stroke="#5363a6" stroke-width="1" />
<polyline points="726.50,375.50 726.50,347.50 632.50,347.50 632.50,375.50 671.50,375.50 671.50,380.50 687.50,380.50 687.50,375.50 726.50,375.50" fill="none" stroke="#5363a6" stroke-width="1" /><polyline points="726.50,786.50 726.50,814.50 632.50,814.50 632.50,786.50 671.50,786.50 671.50,781.50 687.50,781.50 687.50,786.50 726.50,786.50" fill="none" stroke="#5363a6" stroke-width="1" />
<rect x="486" y="374" width="40" height="2" fill="#45548f"/>
<rect x="486" y="786.0" width="40" height="2" fill="#45548f"/>
<rect x="541" y="374" width="40" height="2" fill="#45548f"/>
<rect x="541" y="786.0" width="40" height="2" fill="#45548f"/>
<rect x="632" y="374" width="40" height="2" fill="#45548f"/>
<rect x="632" y="786.0" width="40" height="2" fill="#45548f"/>
<rect x="687" y="374" width="41" height="2" fill="#45548f"/>
<rect x="687" y="786.0" width="41" height="2" fill="#45548f"/>
<line x1="486.5" y1="375.5" x2="486.5" y2="786.5" stroke="#00c86a" stroke-width="1"/><line x1="727.5" y1="375.5" x2="727.5" y2="786.5" stroke="#00c86a" stroke-width="1"/>
<line x1="606.5" y1="460" x2="606.5" y2="702.0" stroke="#00c86a" stroke-width="1"/>
<polyline points="486.50,387.50 564.50,394.50 569.00,396.50 571.50,401.50 577.50,458.00 580.00,462.00 582.50,463.50 585.50,463.50 585.50,581.00" fill="none" stroke="#00c86a" stroke-width="1" /><polyline points="486.50,774.50 564.50,767.50 569.00,765.50 571.50,760.50 577.50,704.00 580.00,700.00 582.50,698.50 585.50,698.50 585.50,581.00" fill="none" stroke="#00c86a" stroke-width="1" /><polyline points="726.50,387.50 648.50,394.50 644.00,396.50 641.50,401.50 635.50,458.00 633.00,462.00 630.50,463.50 627.50,463.50 627.50,581.00" fill="none" stroke="#00c86a" stroke-width="1" /><polyline points="726.50,774.50 648.50,767.50 644.00,765.50 641.50,760.50 635.50,704.00 633.00,700.00 630.50,698.50 627.50,698.50 627.50,581.00" fill="none" stroke="#00c86a" stroke-width="1" />
<polyline points="580.50,375.50 588.20,447.60 606.50,460.00 624.80,447.60 632.50,375.50" fill="none" stroke="#00c86a" stroke-width="1" /><polyline points="580.50,786.50 588.20,714.40 606.50,702.00 624.80,714.40 632.50,786.50" fill="none" stroke="#00c86a" stroke-width="1" />
<polyline points="585.50,515.50 627.50,515.50" fill="none" stroke="#00c86a" stroke-width="1" /><polyline points="585.50,646.50 627.50,646.50" fill="none" stroke="#00c86a" stroke-width="1" />
<polyline points="627.50,465.50 648.50,465.50 648.50,581.00" fill="none" stroke="#eaa200" stroke-width="1" /><polyline points="627.50,696.50 648.50,696.50 648.50,581.00" fill="none" stroke="#eaa200" stroke-width="1" />
<line x1="648.5" y1="465.5" x2="648.5" y2="696.5" stroke="#eaa200" stroke-width="1"/>
<line x1="642.5" y1="539" x2="642.5" y2="623.0" stroke="#eaa200" stroke-width="1"/>
<polyline points="564.50,516.00 585.50,516.00" fill="none" stroke="#eaa200" stroke-width="1" /><polyline points="564.50,646.00 585.50,646.00" fill="none" stroke="#eaa200" stroke-width="1" />
<line x1="564.5" y1="516" x2="564.5" y2="646.0" stroke="#eaa200" stroke-width="1"/>
<line x1="570.5" y1="539" x2="570.5" y2="623.0" stroke="#eaa200" stroke-width="1"/>
<polyline points="570.50,539.00 642.50,539.00" fill="none" stroke="#eaa200" stroke-width="1" /><polyline points="570.50,623.00 642.50,623.00" fill="none" stroke="#eaa200" stroke-width="1" />
<polyline points="581.50,474.50 585.50,474.50" fill="none" stroke="#eaa200" stroke-width="1" /><polyline points="581.50,687.50 585.50,687.50" fill="none" stroke="#eaa200" stroke-width="1" />
<line x1="581.5" y1="474.5" x2="581.5" y2="687.5" stroke="#eaa200" stroke-width="1"/>
<polyline points="564.50,540.50 591.50,540.50 591.50,581.00" fill="none" stroke="#3cb000" stroke-width="1" /><polyline points="564.50,621.50 591.50,621.50 591.50,581.00" fill="none" stroke="#3cb000" stroke-width="1" />
<polyline points="648.50,540.50 622.50,540.50 622.50,581.00" fill="none" stroke="#3cb000" stroke-width="1" /><polyline points="648.50,621.50 622.50,621.50 622.50,581.00" fill="none" stroke="#3cb000" stroke-width="1" />
<polyline points="564.50,561.00 591.50,561.00" fill="none" stroke="#3cb000" stroke-width="1" /><polyline points="564.50,601.00 591.50,601.00" fill="none" stroke="#3cb000" stroke-width="1" />
<polyline points="622.50,561.00 648.50,561.00" fill="none" stroke="#3cb000" stroke-width="1" /><polyline points="622.50,601.00 648.50,601.00" fill="none" stroke="#3cb000" stroke-width="1" />
<polyline points="564.50,547.50 591.50,547.50" fill="none" stroke="#3cb000" stroke-width="1" /><polyline points="564.50,614.50 591.50,614.50" fill="none" stroke="#3cb000" stroke-width="1" />
<polyline points="622.50,547.50 648.50,547.50" fill="none" stroke="#3cb000" stroke-width="1" /><polyline points="622.50,614.50 648.50,614.50" fill="none" stroke="#3cb000" stroke-width="1" />
<polyline points="564.50,553.00 591.50,553.00" fill="none" stroke="#3cb000" stroke-width="1" /><polyline points="564.50,609.00 591.50,609.00" fill="none" stroke="#3cb000" stroke-width="1" />
<polyline points="622.50,553.00 648.50,553.00" fill="none" stroke="#3cb000" stroke-width="1" /><polyline points="622.50,609.00 648.50,609.00" fill="none" stroke="#3cb000" stroke-width="1" />
<rect x="573" y="545.8" width="10" height="9" fill="#000"/>
<path d="M574,546.3 L578,550.3 L574,554.3 M578,546.3 L582,550.3 L578,554.3" fill="none" stroke="#3cb000"/>
<circle cx="578" cy="550.3" r="4.3" fill="none" stroke="#3cb000" stroke-width="0.8"/>
<rect x="573" y="607.2" width="10" height="9" fill="#000"/>
<path d="M574,607.7 L578,611.7 L574,615.7 M578,607.7 L582,611.7 L578,615.7" fill="none" stroke="#3cb000"/>
<circle cx="578" cy="611.7" r="4.3" fill="none" stroke="#3cb000" stroke-width="0.8"/>
<rect x="630.5" y="545.8" width="10" height="9" fill="#000"/>
<path d="M631.5,546.3 L635.5,550.3 L631.5,554.3 M635.5,546.3 L639.5,550.3 L635.5,554.3" fill="none" stroke="#3cb000"/>
<circle cx="635.5" cy="550.3" r="4.3" fill="none" stroke="#3cb000" stroke-width="0.8"/>
<rect x="630.5" y="607.2" width="10" height="9" fill="#000"/>
<path d="M631.5,607.7 L635.5,611.7 L631.5,615.7 M635.5,607.7 L639.5,611.7 L635.5,615.7" fill="none" stroke="#3cb000"/>
<circle cx="635.5" cy="611.7" r="4.3" fill="none" stroke="#3cb000" stroke-width="0.8"/>
<polyline points="564.50,516.50 536.00,516.50 532.50,520.00 532.50,538.50 530.00,542.50 510.00,549.50 503.00,554.00 498.00,562.00 495.50,573.00 495.50,581.00" fill="none" stroke="#1a8cff" stroke-width="1" /><polyline points="564.50,645.50 536.00,645.50 532.50,642.00 532.50,623.50 530.00,619.50 510.00,612.50 503.00,608.00 498.00,600.00 495.50,589.00 495.50,581.00" fill="none" stroke="#1a8cff" stroke-width="1" /><polyline points="564.50,516.50 564.50,547.00 534.50,547.00 529.50,552.00 529.50,581.00" fill="none" stroke="#1a8cff" stroke-width="1" /><polyline points="564.50,645.50 564.50,615.00 534.50,615.00 529.50,610.00 529.50,581.00" fill="none" stroke="#1a8cff" stroke-width="1" />
<polygon points="571.50,472.50 581.50,472.50 581.50,506.50 571.50,506.50" fill="none" stroke="#ffff00" stroke-width="1" />
<polygon points="571.50,482.50 641.50,482.50 641.50,496.50 571.50,496.50" fill="none" stroke="#ffff00" stroke-width="2" />
<polygon points="641.50,482.50 648.50,475.50 648.50,503.50 641.50,496.50" fill="none" stroke="#ffff00" stroke-width="1" />
<polygon points="527.50,520.50 532.50,520.50 532.50,529.50 527.50,529.50" fill="none" stroke="#ffff00" stroke-width="1" />
<polygon points="532.50,522.00 574.50,522.00 574.50,527.50 532.50,527.50" fill="none" stroke="#ffff00" stroke-width="1" />
<polygon points="574.50,522.00 578.50,522.00 578.50,527.50 574.50,527.50" fill="none" stroke="#eaa200" stroke-width="1" />
<polygon points="571.50,689.50 581.50,689.50 581.50,655.50 571.50,655.50" fill="none" stroke="#ffff00" stroke-width="1" />
<polygon points="571.50,679.50 641.50,679.50 641.50,665.50 571.50,665.50" fill="none" stroke="#ffff00" stroke-width="2" />
<polygon points="641.50,679.50 648.50,686.50 648.50,658.50 641.50,665.50" fill="none" stroke="#ffff00" stroke-width="1" />
<polygon points="527.50,641.50 532.50,641.50 532.50,632.50 527.50,632.50" fill="none" stroke="#ffff00" stroke-width="1" />
<polygon points="532.50,640.00 574.50,640.00 574.50,634.50 532.50,634.50" fill="none" stroke="#ffff00" stroke-width="1" />
<polygon points="574.50,640.00 578.50,640.00 578.50,634.50 574.50,634.50" fill="none" stroke="#eaa200" stroke-width="1" />
<circle cx="1117.5" cy="581.0" r="233.75" fill="none" stroke="#5363a6" stroke-width="1.15"/>
<circle cx="1117.5" cy="581.0" r="205.75" fill="none" stroke="#00c86a" stroke-width="1.15"/><circle cx="1117.5" cy="581.0" r="193.75" fill="none" stroke="#00c86a" stroke-width="1.15"/><circle cx="1117.5" cy="581.0" r="116.25" fill="none" stroke="#00c86a" stroke-width="1.15"/>
<circle cx="1117.5" cy="581.0" r="106.75" fill="none" stroke="#eaa200" stroke-width="1.15"/><circle cx="1117.5" cy="581.0" r="70.25" fill="none" stroke="#eaa200" stroke-width="1.15"/>
<circle cx="1117.5" cy="581.0" r="64.25" fill="none" stroke="#1a8cff" stroke-width="1.15"/><circle cx="1117.5" cy="581.0" r="65.5" fill="none" stroke="#00c86a" stroke-width="1.15"/>
<circle cx="1117.5" cy="581.0" r="41" fill="none" stroke="#1a8cff" stroke-width="1.15"/><circle cx="1117.5" cy="581.0" r="30" fill="none" stroke="#1a8cff" stroke-width="1.15"/><circle cx="1117.5" cy="581.0" r="11" fill="none" stroke="#1a8cff" stroke-width="1.15"/>
<polygon points="1221.80,581.00 1215.65,591.65 1203.35,591.65 1197.20,581.00 1203.35,570.35 1215.65,570.35" fill="none" stroke="#ffff00" stroke-width="1.5" />
<circle cx="1209.50" cy="581.00" r="7" fill="none" stroke="#00c86a" stroke-width="1.2"/>
<polygon points="1193.21,652.20 1182.55,658.35 1171.90,652.20 1171.90,639.90 1182.55,633.75 1193.21,639.90" fill="none" stroke="#ffff00" stroke-width="1.5" />
<circle cx="1182.55" cy="646.05" r="7" fill="none" stroke="#00c86a" stroke-width="1.2"/>
<polygon points="1128.15,679.15 1117.50,685.30 1106.85,679.15 1106.85,666.85 1117.50,660.70 1128.15,666.85" fill="none" stroke="#ffff00" stroke-width="1.5" />
<circle cx="1117.50" cy="673.00" r="7" fill="none" stroke="#00c86a" stroke-width="1.2"/>
<polygon points="1063.10,652.20 1052.45,658.35 1041.79,652.20 1041.79,639.90 1052.45,633.75 1063.10,639.90" fill="none" stroke="#ffff00" stroke-width="1.5" />
<circle cx="1052.45" cy="646.05" r="7" fill="none" stroke="#00c86a" stroke-width="1.2"/>
<rect x="1051.85" y="645.45" width="1.3" height="1.3" fill="#e00"/>
<polygon points="1037.80,581.00 1031.65,591.65 1019.35,591.65 1013.20,581.00 1019.35,570.35 1031.65,570.35" fill="none" stroke="#ffff00" stroke-width="1.5" />
<circle cx="1025.50" cy="581.00" r="7" fill="none" stroke="#00c86a" stroke-width="1.2"/>
<polygon points="1063.10,522.10 1052.45,528.25 1041.79,522.10 1041.79,509.80 1052.45,503.65 1063.10,509.80" fill="none" stroke="#ffff00" stroke-width="1.5" />
<circle cx="1052.45" cy="515.95" r="7" fill="none" stroke="#00c86a" stroke-width="1.2"/>
<rect x="1051.85" y="515.35" width="1.3" height="1.3" fill="#e00"/>
<polygon points="1128.15,495.15 1117.50,501.30 1106.85,495.15 1106.85,482.85 1117.50,476.70 1128.15,482.85" fill="none" stroke="#ffff00" stroke-width="1.5" />
<circle cx="1117.50" cy="489.00" r="7" fill="none" stroke="#00c86a" stroke-width="1.2"/>
<polygon points="1193.21,522.10 1182.55,528.25 1171.90,522.10 1171.90,509.80 1182.55,503.65 1193.21,509.80" fill="none" stroke="#ffff00" stroke-width="1.5" />
<circle cx="1182.55" cy="515.95" r="7" fill="none" stroke="#00c86a" stroke-width="1.2"/>
<g transform="rotate(0 1117.5 581.0)">
<path d="M1158.5,571.4 L1174.5,572.0 A9 9 0 0 1 1174.5,590.0 L1158.5,590.6 Z" fill="none" stroke="#eaa200" stroke-width="1.1"/>
<polygon points="1182.00,581.00 1177.75,588.36 1169.25,588.36 1165.00,581.00 1169.25,573.64 1177.75,573.64" fill="none" stroke="#ffff00" stroke-width="1.3" />
</g>
<g transform="rotate(90 1117.5 581.0)">
<path d="M1158.5,571.4 L1174.5,572.0 A9 9 0 0 1 1174.5,590.0 L1158.5,590.6 Z" fill="none" stroke="#eaa200" stroke-width="1.1"/>
<polygon points="1182.00,581.00 1177.75,588.36 1169.25,588.36 1165.00,581.00 1169.25,573.64 1177.75,573.64" fill="none" stroke="#ffff00" stroke-width="1.3" />
</g>
<g transform="rotate(180 1117.5 581.0)">
<path d="M1158.5,571.4 L1174.5,572.0 A9 9 0 0 1 1174.5,590.0 L1158.5,590.6 Z" fill="none" stroke="#eaa200" stroke-width="1.1"/>
<polygon points="1182.00,581.00 1177.75,588.36 1169.25,588.36 1165.00,581.00 1169.25,573.64 1177.75,573.64" fill="none" stroke="#ffff00" stroke-width="1.3" />
</g>
<g transform="rotate(270 1117.5 581.0)">
<path d="M1158.5,571.4 L1174.5,572.0 A9 9 0 0 1 1174.5,590.0 L1158.5,590.6 Z" fill="none" stroke="#eaa200" stroke-width="1.1"/>
<polygon points="1182.00,581.00 1177.75,588.36 1169.25,588.36 1165.00,581.00 1169.25,573.64 1177.75,573.64" fill="none" stroke="#ffff00" stroke-width="1.3" />
</g>
</svg>
<div class="a" style="left:33px;top:995px;width:1834px;height:18px;background:#f0f0f0"></div>
<div class="a" style="left:33px;top:1010px;width:1834px;height:3px;background:#d2d2d2"></div>
<svg width="1909" height="1080" viewBox="0 0 1909 1080"><rect x="33.5" y="995.5" width="14" height="14" fill="#e6e6e6" stroke="#bdbdbd"/><rect x="49.5" y="995.5" width="14" height="14" fill="#e6e6e6" stroke="#bdbdbd"/><rect x="65.5" y="995.5" width="14" height="14" fill="#e6e6e6" stroke="#bdbdbd"/><rect x="81.5" y="995.5" width="14" height="14" fill="#e6e6e6" stroke="#bdbdbd"/><rect x="97.5" y="995.5" width="14" height="14" fill="#e6e6e6" stroke="#bdbdbd"/><rect x="36.5" y="998" width="1.5" height="9" fill="#111"/><path d="M43.5 998 v9 l-5 -4.5z" fill="#111"/><path d="M59 998 v9 l-5 -4.5z" fill="#111"/><path d="M71 998 v9 l5 -4.5z" fill="#111"/><path d="M85 998 v9 l5 -4.5z" fill="#111"/><rect x="91.5" y="998" width="1.5" height="9" fill="#111"/><path d="M104.5 997.5 v10 M99.5 1002.5 h10" stroke="#111" stroke-width="1.8"/><path d="M116 995.5 L121 1010" stroke="#222" stroke-width="1"/><path d="M160.5 1010 L166.25 995.5 M164.25 995.5 L170 1010" stroke="#222" stroke-width="1" fill="none"/><path d="M281 1010 L286.5 995.5 M284.5 995.5 L290 1010" stroke="#222" stroke-width="1" fill="none"/><path d="M381 1010 L386.5 995.5 M384.5 995.5 L390 1010" stroke="#222" stroke-width="1" fill="none"/><path d="M503.6 1010 L509.3 995.5 M507.3 995.5 L513 1010" stroke="#222" stroke-width="1" fill="none"/><path d="M601.6 1010 L607.3 995.5 M605.3 995.5 L611 1010" stroke="#222" stroke-width="1" fill="none"/><path d="M682 1010 L688 995.5" stroke="#222" stroke-width="1"/><rect x="121" y="1010" width="44" height="3" fill="#f4f4f4"/></svg>
<span class="tx" style="left:124.70px;top:996.00px;font-size:12.52px;line-height:14px;font-family:'Liberation Sans', sans-serif;font-weight:bold;color:#000;transform:scaleX(0.8932);">Model</span>
<span class="tx" style="left:181.00px;top:996.00px;font-size:12.52px;line-height:14px;font-family:'Liberation Sans', sans-serif;font-weight:normal;color:#000;transform:scaleX(0.8583);">AB 01 Teil 001-003</span>
<span class="tx" style="left:301.80px;top:996.00px;font-size:12.52px;line-height:14px;font-family:'Liberation Sans', sans-serif;font-weight:normal;color:#000;transform:scaleX(0.8671);">AB 01 Teil 004</span>
<span class="tx" style="left:401.70px;top:996.00px;font-size:12.52px;line-height:14px;font-family:'Liberation Sans', sans-serif;font-weight:normal;color:#000;transform:scaleX(0.8649);">AB 01 Teil 005-007</span>
<span class="tx" style="left:523.20px;top:996.00px;font-size:12.52px;line-height:14px;font-family:'Liberation Sans', sans-serif;font-weight:normal;color:#000;transform:scaleX(0.8671);">AB 01 Teil 014</span>
<span class="tx" style="left:618.60px;top:996.00px;font-size:12.52px;line-height:14px;font-family:'Liberation Sans', sans-serif;font-weight:normal;color:#000;transform:scaleX(0.8780);">AB Teil 777</span>
<div class="a" style="left:0px;top:1013px;width:1902px;height:30px;background:#535353"></div>
<div class="a" style="left:0px;top:1018px;width:17px;height:24px;background:#a9a9a9"></div>
<div class="a" style="left:18px;top:1018px;width:1884px;height:24px;background:#fff;border-top:2px solid #a8a8a8;border-left:2px solid #a8a8a8"></div>
<svg style="left:4px;top:1025px" width="10" height="10" viewBox="0 0 10 10"><path d="M1 1 L9 9 M9 1 L1 9" stroke="#111" stroke-width="1.5"/></svg>
<span class="tx" style="left:21.00px;top:1023.00px;font-size:11.62px;line-height:13px;font-family:'Liberation Mono', monospace;font-weight:bold;color:#000;transform:scaleX(0.9750);">Befehl:</span>
<div class="a" style="left:0px;top:1042px;width:1902px;height:8px;background:#3b4049"></div>
<div class="a" style="left:0px;top:1049px;width:1902px;height:23px;background:#313131"></div>
<span class="tx" style="left:2.50px;top:1052.00px;font-size:10.71px;line-height:12px;font-family:'Liberation Sans', sans-serif;font-weight:normal;color:#f0f0f0;transform:scaleX(1.0186);">Bereit</span>
<span class="tx" style="left:1070.00px;top:1052.00px;font-size:10.71px;line-height:12px;font-family:'Liberation Sans', sans-serif;font-weight:normal;color:#f0f0f0;transform:scaleX(1.0057);">32176.6418,2204.2526,0</span>
<span class="tx" style="left:1633.30px;top:1052.00px;font-size:10.71px;line-height:12px;font-family:'Liberation Sans', sans-serif;font-weight:normal;color:#f0f0f0;transform:scaleX(0.9819);">MODEL</span>
<span class="tx" style="left:1677.00px;top:1052.00px;font-size:10.71px;line-height:12px;font-family:'Liberation Sans', sans-serif;font-weight:normal;color:#8a8a8a;transform:scaleX(0.8670);">TABLET</span>
<span class="tx" style="left:1312.00px;top:1052.00px;font-size:10.71px;line-height:12px;font-family:'Liberation Sans', sans-serif;font-weight:normal;color:#f0f0f0;transform:scaleX(0.9269);">1:1</span>
<svg width="1909" height="1080" viewBox="0 0 1909 1080"><rect x="1055" y="1047" width="1" height="22" fill="#202020"/><rect x="1056" y="1047" width="1" height="22" fill="#444"/><rect x="1065.4" y="1047" width="1" height="22" fill="#202020"/><rect x="1066.4" y="1047" width="1" height="22" fill="#444"/><rect x="1219.8" y="1047" width="1" height="22" fill="#202020"/><rect x="1220.8" y="1047" width="1" height="22" fill="#444"/><rect x="1250.9" y="1047" width="1" height="22" fill="#202020"/><rect x="1251.9" y="1047" width="1" height="22" fill="#444"/><rect x="1280.8" y="1047" width="1" height="22" fill="#202020"/><rect x="1281.8" y="1047" width="1" height="22" fill="#444"/><rect x="1330" y="1047" width="1" height="22" fill="#202020"/><rect x="1331" y="1047" width="1" height="22" fill="#444"/><rect x="1360" y="1047" width="1" height="22" fill="#202020"/><rect x="1361" y="1047" width="1" height="22" fill="#444"/><rect x="1390" y="1047" width="1" height="22" fill="#202020"/><rect x="1391" y="1047" width="1" height="22" fill="#444"/><rect x="1419" y="1047" width="1" height="22" fill="#202020"/><rect x="1420" y="1047" width="1" height="22" fill="#444"/><rect x="1449" y="1047" width="1" height="22" fill="#202020"/><rect x="1450" y="1047" width="1" height="22" fill="#444"/><rect x="1480" y="1047" width="1" height="22" fill="#202020"/><rect x="1481" y="1047" width="1" height="22" fill="#444"/><rect x="1510" y="1047" width="1" height="22" fill="#202020"/><rect x="1511" y="1047" width="1" height="22" fill="#444"/><rect x="1540" y="1047" width="1" height="22" fill="#202020"/><rect x="1541" y="1047" width="1" height="22" fill="#444"/><rect x="1570" y="1047" width="1" height="22" fill="#202020"/><rect x="1571" y="1047" width="1" height="22" fill="#444"/><rect x="1600" y="1047" width="1" height="22" fill="#202020"/><rect x="1601" y="1047" width="1" height="22" fill="#444"/><rect x="1629.8" y="1047" width="1" height="22" fill="#202020"/><rect x="1630.8" y="1047" width="1" height="22" fill="#444"/><rect x="1673.5" y="1047" width="1" height="22" fill="#202020"/><rect x="1674.5" y="1047" width="1" height="22" fill="#444"/><rect x="1715.6" y="1047" width="1" height="22" fill="#202020"/><rect x="1716.6" y="1047" width="1" height="22" fill="#444"/><rect x="1744.8" y="1047" width="1" height="22" fill="#202020"/><rect x="1745.8" y="1047" width="1" height="22" fill="#444"/><rect x="1775.8" y="1047" width="1" height="22" fill="#202020"/><rect x="1776.8" y="1047" width="1" height="22" fill="#444"/><rect x="1805.7" y="1047" width="1" height="22" fill="#202020"/><rect x="1806.7" y="1047" width="1" height="22" fill="#444"/><rect x="1835.6" y="1047" width="1" height="22" fill="#202020"/><rect x="1836.6" y="1047" width="1" height="22" fill="#444"/><rect x="1865.5" y="1047" width="1" height="22" fill="#202020"/><rect x="1866.5" y="1047" width="1" height="22" fill="#444"/><rect x="1224.9" y="1047.5" width="21.59999999999991" height="21" fill="#9c9c9c" stroke="#dedede" stroke-width="1"/><rect x="1334.3" y="1047.5" width="20.90000000000009" height="21" fill="#9c9c9c" stroke="#dedede" stroke-width="1"/><rect x="1454.2" y="1047.5" width="20.899999999999864" height="21" fill="#9c9c9c" stroke="#dedede" stroke-width="1"/><rect x="1484.3" y="1047.5" width="20.799999999999955" height="21" fill="#9c9c9c" stroke="#dedede" stroke-width="1"/><rect x="1544.1" y="1047.5" width="21.40000000000009" height="21" fill="#9c9c9c" stroke="#dedede" stroke-width="1"/><rect x="1574.5" y="1047.5" width="21" height="21" fill="#9c9c9c" stroke="#dedede" stroke-width="1"/><rect x="1840.2" y="1047.5" width="21.299999999999955" height="21" fill="#9c9c9c" stroke="#dedede" stroke-width="1"/><path d="M1226 1067 L1246 1048" stroke="#fff" stroke-width="1"/><path d="M1227 1058 H1245" stroke="#e22" stroke-width="1.2"/><path d="M1235 1050 V1056" stroke="#2c2" stroke-width="1.2"/><path d="M1236 1058 H1245" stroke="#0ff" stroke-width="1.2"/><path d="M1236 1059 V1067" stroke="#f0a" stroke-width="1.2"/><rect x="1233" y="1055" width="5" height="5" fill="none" stroke="#e22"/><path d="M1257 1058.5 H1280" stroke="#e22" stroke-width="1.2"/><path d="M1268.5 1048 V1068" stroke="#2c2" stroke-width="1"/><rect x="1266" y="1056" width="5" height="5" fill="none" stroke="#e22" stroke-width="1"/><path d="M1295.8 1050 L1297.3 1059 L1294.3 1059 Z M1287.8 1065 L1295.8 1058 L1296.8 1061 Z M1303.8 1065 L1295.8 1058 L1294.8 1061 Z" fill="#e8e8e8"/><path d="M1343 1050 L1344.5 1059 L1341.5 1059 Z M1335 1065 L1343 1058 L1344 1061 Z M1351 1065 L1343 1058 L1342 1061 Z" fill="#f4f4f4"/><circle cx="1349" cy="1063" r="3.5" fill="#f8f060"/><path d="M1373 1050 L1374.5 1059 L1371.5 1059 Z M1365 1065 L1373 1058 L1374 1061 Z M1381 1065 L1373 1058 L1372 1061 Z" fill="#e8e8e8"/><path d="M1378 1050 l-3 5 h3 l-3 5" stroke="#e0a040" stroke-width="1.2" fill="none"/><g fill="#fff"><rect x="1398.0" y="1050.0" width="2" height="2"/><rect x="1398.0" y="1054.5" width="2" height="2"/><rect x="1398.0" y="1059.0" width="2" height="2"/><rect x="1398.0" y="1063.5" width="2" height="2"/><rect x="1402.5" y="1050.0" width="2" height="2"/><rect x="1402.5" y="1054.5" width="2" height="2"/><rect x="1402.5" y="1059.0" width="2" height="2"/><rect x="1402.5" y="1063.5" width="2" height="2"/><rect x="1407.0" y="1050.0" width="2" height="2"/><rect x="1407.0" y="1054.5" width="2" height="2"/><rect x="1407.0" y="1059.0" width="2" height="2"/><rect x="1407.0" y="1063.5" width="2" height="2"/><rect x="1411.5" y="1050.0" width="2" height="2"/><rect x="1411.5" y="1054.5" width="2" height="2"/><rect x="1411.5" y="1059.0" width="2" height="2"/><rect x="1411.5" y="1063.5" width="2" height="2"/></g><rect x="1397.5" y="1062.5" width="3" height="3" fill="#e22"/><path d="M1426 1053 H1443 M1426 1057.5 H1443 M1426 1062 H1443 M1430 1049 V1067 M1434.5 1049 V1067 M1439 1049 V1067" stroke="#fff" stroke-width="1.3"/><path d="M1458 1054 h6 M1461 1051 v6" stroke="#111" stroke-width="1.3"/><rect x="1464" y="1061" width="9" height="4" fill="#111"/><path d="M1489 1050 V1065 H1502" fill="none" stroke="#2c2" stroke-width="1"/><path d="M1489 1065 H1502" stroke="#e22" stroke-width="1.2"/><path d="M1493 1060 H1497 V1065" fill="none" stroke="#fff" stroke-width="0.8"/><circle cx="1525" cy="1059" r="7" fill="none" stroke="#ddd" stroke-width="1.6"/><path d="M1525 1059 L1531 1052 M1525 1059 H1533" stroke="#e22" stroke-width="1.2"/><rect x="1548.5" y="1052.5" width="14" height="13" fill="none" stroke="#222" stroke-width="1.2"/><rect x="1546.5" y="1049.5" width="5" height="5" fill="none" stroke="#e22" stroke-width="1.2"/><path d="M1578 1066 L1591 1053 M1578 1066 H1592" stroke="#222" stroke-width="1.3"/><path d="M1606 1051 H1624 M1606 1056 H1620 M1606 1061 H1624 M1606 1066 H1618" stroke="#fff" stroke-width="2.2"/><rect x="1729" y="1049" width="4" height="20" fill="#1a6fd0" transform="rotate(0 1731 1059)"/><rect x="1729" y="1049" width="4" height="20" fill="#1a6fd0" transform="rotate(45 1731 1059)"/><rect x="1729" y="1049" width="4" height="20" fill="#1a6fd0" transform="rotate(90 1731 1059)"/><rect x="1729" y="1049" width="4" height="20" fill="#1a6fd0" transform="rotate(135 1731 1059)"/><circle cx="1731" cy="1059" r="7" fill="#1a6fd0"/><circle cx="1731" cy="1059" r="2.5" fill="#313131"/><circle cx="1761" cy="1054" r="4" fill="#ddd"/><circle cx="1761" cy="1054" r="1.8" fill="#555"/><path d="M1757 1057 L1757 1067 L1761 1063 L1765 1067 L1765 1057" fill="#ddd"/><rect x="1783" y="1050" width="16" height="11" fill="#fff"/><rect x="1784.5" y="1051.5" width="13" height="8" fill="#1a6fd0"/><path d="M1787 1058 L1795 1052 M1795 1052 h-3 M1795 1052 v3 M1787 1058 h3 M1787 1058 v-3" stroke="#fff" stroke-width="1"/><rect x="1786" y="1064" width="10" height="2" fill="#1a6fd0"/><rect x="1811" y="1049" width="11" height="8" fill="#fff"/><rect x="1811" y="1049" width="11" height="2" fill="#1a5fc0"/><rect x="1817" y="1057" width="11" height="10" fill="#fff"/><rect x="1817" y="1056" width="11" height="2" fill="#1a5fc0"/><circle cx="1851" cy="1058" r="7.5" fill="#f0f0f0" stroke="#222" stroke-width="1.5"/><path d="M1847 1062 L1855 1054" stroke="#1a7fe0" stroke-width="1.6"/><circle cx="1881" cy="1058.5" r="8" fill="#2fa12f"/><circle cx="1879" cy="1056" r="5" fill="#5fd05f" opacity="0.6"/><path d="M1877 1058.5 L1880 1061.5 L1886 1055" stroke="#fff" stroke-width="2" fill="none"/></svg></body></html>
